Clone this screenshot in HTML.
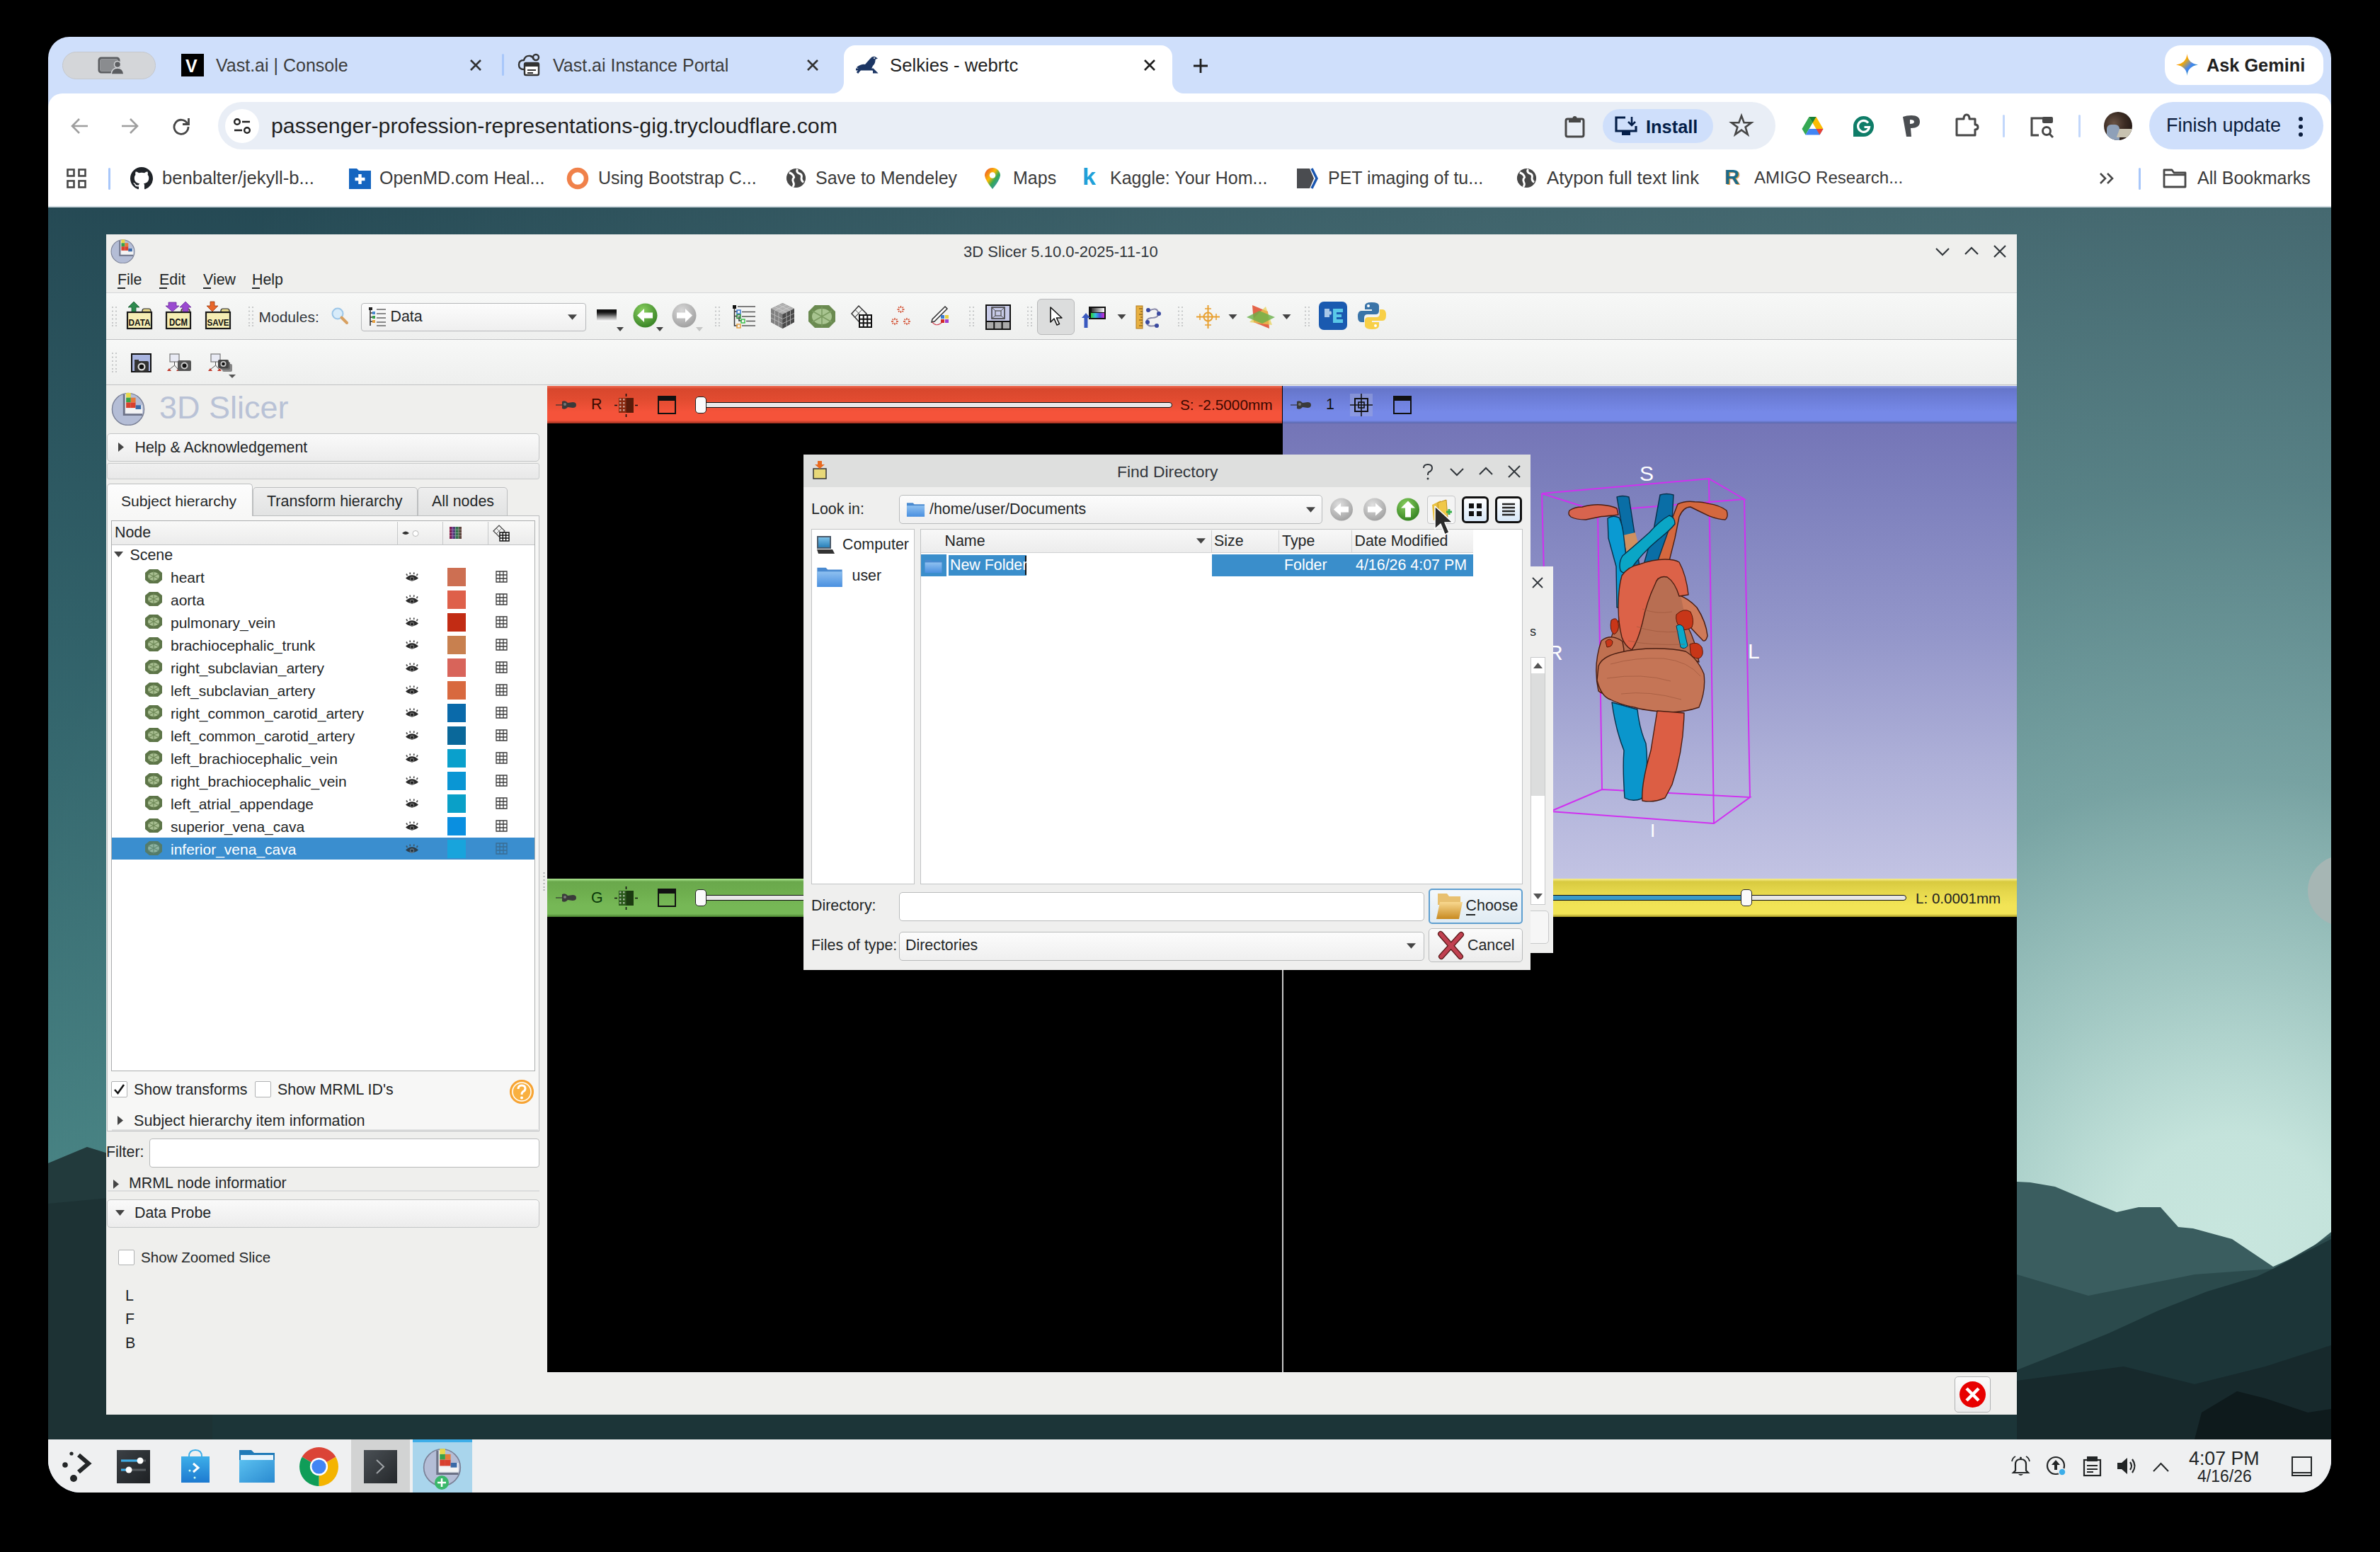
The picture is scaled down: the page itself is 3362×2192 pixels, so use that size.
<!DOCTYPE html>
<html><head><meta charset="utf-8">
<style>
*{box-sizing:border-box;margin:0;padding:0}
html,body{width:3362px;height:2192px;overflow:hidden;background:#000;font-family:"Liberation Sans",sans-serif;position:relative}
.a{position:absolute}
.t{position:absolute;white-space:nowrap;line-height:1}
svg{position:absolute;overflow:visible}
.ct{color:#3c3c3c;font-size:25px}
.bm{color:#3a3a3a;font-size:25px}
.sf{font-size:21.4px;color:#232627}
.wf{font-size:21.4px;color:#fff}
</style></head><body>
<div class="a" style="left:68px;top:52px;width:3225px;height:2056px;border-radius:30px 30px 46px 46px;overflow:hidden;background:#cfdffb">
<div class="a" style="left:-68px;top:-52px;width:3362px;height:2192px">
<!-- ===== tab strip ===== -->
<div class="a" style="left:88px;top:73px;width:132px;height:39px;border-radius:20px;background:#d4d6d9;border:1px solid #c4c7cc"></div>
<svg style="left:138px;top:80px" width="38" height="26" viewBox="0 0 38 26"><rect x="2" y="2" width="28" height="20" rx="3" fill="none" stroke="#5b5d60" stroke-width="3"/><rect x="4" y="4" width="24" height="16" fill="#8a8c8f"/><circle cx="28" cy="11" r="4.5" fill="#5b5d60" stroke="#d4d6d9" stroke-width="1.5"/><path d="M19 25 Q20 16 28 16 Q36 16 37 25Z" fill="#5b5d60" stroke="#d4d6d9" stroke-width="1.5"/></svg>
<div class="a" style="left:256px;top:76px;width:32px;height:32px;background:#000"></div>
<div class="t" style="left:262px;top:81px;font-size:25px;color:#fff;font-weight:bold">V</div>
<div class="t ct" style="left:305px;top:80px">Vast.ai | Console</div>
<svg style="left:663px;top:83px" width="18" height="18" viewBox="0 0 18 18"><path d="M2 2L16 16M16 2L2 16" stroke="#333" stroke-width="2.6"/></svg>
<div class="a" style="left:709px;top:76px;width:3px;height:31px;background:#a8c7fa;border-radius:2px"></div>
<svg style="left:731px;top:75px" width="34" height="34" viewBox="0 0 34 34"><path d="M9 23 Q2 23 2 16.5 Q2 10 9 10 Q11 3 18 4 Q22 5 23 9" fill="none" stroke="#333" stroke-width="2.4"/><circle cx="26" cy="6" r="4" fill="none" stroke="#333" stroke-width="2.4"/><rect x="10" y="14" width="20" height="17" rx="2" fill="#fff" stroke="#333" stroke-width="2.4"/><rect x="10" y="14" width="20" height="5" fill="#333"/><path d="M14 24h12M14 28h8" stroke="#333" stroke-width="2"/></svg>
<div class="t ct" style="left:781px;top:80px">Vast.ai Instance Portal</div>
<svg style="left:1139px;top:83px" width="18" height="18" viewBox="0 0 18 18"><path d="M2 2L16 16M16 2L2 16" stroke="#333" stroke-width="2.6"/></svg>
<!-- active tab with flares -->
<div class="a" style="left:1176px;top:100px;width:496px;height:32px;background:#fff"></div>
<div class="a" style="left:1160px;top:100px;width:32px;height:32px;background:#cfdffb;border-radius:0 0 16px 0"></div>
<div class="a" style="left:1656px;top:100px;width:32px;height:32px;background:#cfdffb;border-radius:0 0 0 16px"></div>
<div class="a" style="left:1192px;top:64px;width:464px;height:68px;background:#fff;border-radius:16px 16px 0 0"></div>
<svg style="left:1207px;top:78px" width="34" height="26" viewBox="0 0 34 26"><path d="M3 17Q10 12 15 13L22 5Q25 1 29 2L33 4.5L29.5 6Q30 11 26 15L24 19H6Z" fill="#1c3664"/><circle cx="28" cy="4" r="1" fill="#fff"/><path d="M2 20H26L30 24H26" fill="none" stroke="#1c3664" stroke-width="3"/><path d="M8 20L4 25" stroke="#1c3664" stroke-width="3"/></svg>
<div class="t" style="left:1257px;top:80px;font-size:25.7px;color:#1f1f1f">Selkies - webrtc</div>
<svg style="left:1615px;top:83px" width="18" height="18" viewBox="0 0 18 18"><path d="M2 2L16 16M16 2L2 16" stroke="#1f1f1f" stroke-width="2.6"/></svg>
<svg style="left:1685px;top:82px" width="22" height="22" viewBox="0 0 22 22"><path d="M11 1V21M1 11H21" stroke="#1f1f1f" stroke-width="2.8"/></svg>
<!-- gemini -->
<div class="a" style="left:3058px;top:64px;width:224px;height:56px;border-radius:22px;background:#fff"></div>
<svg style="left:3074px;top:76px" width="31" height="31" viewBox="0 0 30 30"><defs><linearGradient id="gg" x1="0" y1="0" x2="1" y2="1"><stop offset="0" stop-color="#f5493d"/><stop offset=".35" stop-color="#f9ab00"/><stop offset=".6" stop-color="#4285f4"/><stop offset="1" stop-color="#34a853"/></linearGradient></defs><path d="M15 0 Q16 13 30 15 Q16 17 15 30 Q14 17 0 15 Q14 13 15 0Z" fill="url(#gg)"/></svg>
<div class="t" style="left:3117px;top:80px;font-size:25.3px;font-weight:bold;color:#1f1f1f">Ask Gemini</div>

<!-- ===== toolbar ===== -->
<div class="a" style="left:68px;top:132px;width:3225px;height:161px;background:#fff;border-radius:20px 20px 0 0"></div>
<svg style="left:99px;top:166px" width="26" height="24" viewBox="0 0 26 24"><path d="M25 12H3M13 2L3 12L13 22" fill="none" stroke="#9e9e9e" stroke-width="2.6"/></svg>
<svg style="left:171px;top:166px" width="26" height="24" viewBox="0 0 26 24"><path d="M1 12H23M13 2L23 12L13 22" fill="none" stroke="#9e9e9e" stroke-width="2.6"/></svg>
<svg style="left:243px;top:165px" width="26" height="26" viewBox="0 0 26 26"><path d="M21.5 9 A10 10 0 1 0 23 14" fill="none" stroke="#474747" stroke-width="2.8"/><path d="M23.5 2V10.5H15" fill="none" stroke="#474747" stroke-width="2.8"/></svg>
<div class="a" style="left:308px;top:144px;width:2200px;height:67px;border-radius:34px;background:#e9eef6"></div>
<div class="a" style="left:318px;top:154px;width:48px;height:48px;border-radius:50%;background:#fff"></div>
<svg style="left:329px;top:166px" width="26" height="24" viewBox="0 0 26 24"><circle cx="6" cy="6" r="3.8" fill="none" stroke="#1f1f1f" stroke-width="2.4"/><path d="M13 6H24M2 18H13" stroke="#1f1f1f" stroke-width="2.4"/><circle cx="20" cy="18" r="3.8" fill="none" stroke="#1f1f1f" stroke-width="2.4"/></svg>
<div class="t" style="left:383px;top:163px;font-size:30.3px;color:#1f1f1f">passenger-profession-representations-gig.trycloudflare.com</div>
<svg style="left:2210px;top:163px" width="29" height="32" viewBox="0 0 29 32"><rect x="2" y="5" width="25" height="25" rx="2.5" fill="none" stroke="#474747" stroke-width="3"/><rect x="6" y="5" width="17" height="5" fill="#474747"/><circle cx="14.5" cy="4" r="3" fill="#474747"/></svg>
<div class="a" style="left:2264px;top:154px;width:156px;height:48px;border-radius:24px;background:#cfdffb"></div>
<svg style="left:2280px;top:164px" width="33" height="28" viewBox="0 0 33 28"><path d="M16 2H3V21H31V14" fill="none" stroke="#041e49" stroke-width="3.2"/><path d="M25 1V12M20 8L25 13L30 8" fill="none" stroke="#041e49" stroke-width="2.6"/><rect x="11" y="21" width="12" height="6" fill="#041e49"/></svg>
<div class="t" style="left:2325px;top:167px;font-size:25.4px;font-weight:bold;color:#041e49">Install</div>
<svg style="left:2444px;top:161px" width="32" height="32" viewBox="0 0 32 32"><path d="M16 2.5L19.6 12.3H30L21.6 18.6L24.8 29L16 22.6L7.2 29L10.4 18.6L2 12.3H12.4Z" fill="none" stroke="#474747" stroke-width="2.6" stroke-linejoin="miter"/></svg>
<svg style="left:2545px;top:164px" width="31" height="27" viewBox="0 0 31 27"><path d="M10.5 1H20.5L30.5 18H20.5Z" fill="#fbbc04"/><path d="M10.5 1L0.5 18L5.5 26.5L15.5 9.5Z" fill="#34a853"/><path d="M5.5 26.5H25.5L30.5 18H10.5Z" fill="#4285f4"/><path d="M25.5 26.5L30.5 18H20.5Z" fill="#ea4335"/><path d="M10.5 1L15.5 9.5L20.5 1Z" fill="#188038"/></svg>
<svg style="left:2617px;top:163px" width="31" height="31" viewBox="0 0 31 31"><path d="M15.5 1A14.5 14.5 0 1 1 15.5 30H1V15.5A14.5 14.5 0 0 1 15.5 1Z" fill="#0f7d68"/><path d="M22 10.5A8 8 0 1 0 23.5 16.5H16.5" fill="none" stroke="#fff" stroke-width="3.2"/></svg>
<svg style="left:2687px;top:162px" width="26" height="32" viewBox="0 0 26 32"><path d="M1 3Q6 1 13 1Q25 1 25 10Q25 19 12 19L13 31L6 31Z" fill="#4b4e52"/><path d="M11 7Q17 7 17 10Q17 13 11 13Z" fill="#fff"/></svg>
<svg style="left:2761px;top:159px" width="35" height="34" viewBox="0 0 35 34"><path d="M3 9H13Q13 3 17 3Q21 3 21 9H29V17Q33 17 33 20.5Q33 24 29 24V32H3Z" fill="none" stroke="#474747" stroke-width="3" stroke-linejoin="round"/></svg>
<div class="a" style="left:2829px;top:162px;width:3px;height:32px;background:#c2d7fb;border-radius:2px"></div>
<svg style="left:2867px;top:164px" width="36" height="31" viewBox="0 0 36 31"><path d="M20 3H3V27H13" fill="none" stroke="#474747" stroke-width="3"/><rect x="18" y="1" width="15" height="9" rx="2" fill="#474747"/><circle cx="24" cy="21" r="5.5" fill="none" stroke="#474747" stroke-width="3"/><path d="M28 25L33 30" stroke="#474747" stroke-width="3"/></svg>
<div class="a" style="left:2936px;top:162px;width:3px;height:32px;background:#c2d7fb;border-radius:2px"></div>
<div class="a" style="left:2972px;top:158px;width:40px;height:40px;border-radius:50%;background:radial-gradient(circle at 35% 40%,#6a5446 0,#3b2b22 45%,#2a1e18 70%);overflow:hidden"><div class="a" style="left:4px;top:18px;width:18px;height:22px;background:#8ea0b8;border-radius:6px 6px 0 0"></div><div class="a" style="left:20px;top:24px;width:18px;height:12px;background:#c8c2b0;transform:skewX(-20deg)"></div></div>
<div class="a" style="left:3036px;top:144px;width:246px;height:67px;border-radius:34px;background:#cfdffb"></div>
<div class="t" style="left:3060px;top:164px;font-size:27px;color:#0b1d3d">Finish update</div>
<svg style="left:3245px;top:164px" width="10" height="30" viewBox="0 0 10 30"><circle cx="5" cy="4" r="3" fill="#0b1d3d"/><circle cx="5" cy="15" r="3" fill="#0b1d3d"/><circle cx="5" cy="26" r="3" fill="#0b1d3d"/></svg>

<!-- ===== bookmarks ===== -->
<svg style="left:94px;top:238px" width="28" height="28" viewBox="0 0 28 28"><g fill="none" stroke="#474747" stroke-width="2.6"><rect x="1.5" y="1.5" width="9" height="9"/><rect x="17.5" y="1.5" width="9" height="9"/><rect x="1.5" y="17.5" width="9" height="9"/><rect x="17.5" y="17.5" width="9" height="9"/></g></svg>
<div class="a" style="left:153px;top:237px;width:3px;height:31px;background:#a8c7fa;border-radius:2px"></div>
<svg style="left:184px;top:236px" width="32" height="32" viewBox="0 0 16 16"><path fill="#1f2328" d="M8 0C3.58 0 0 3.58 0 8c0 3.54 2.29 6.53 5.47 7.59.4.07.55-.17.55-.38 0-.19-.01-.82-.01-1.49-2.01.37-2.53-.49-2.69-.94-.09-.23-.48-.94-.82-1.13-.28-.15-.68-.52-.01-.53.63-.01 1.08.58 1.23.82.72 1.21 1.87.87 2.33.66.07-.52.28-.87.51-1.07-1.78-.2-3.64-.89-3.64-3.95 0-.87.31-1.59.82-2.15-.08-.2-.36-1.02.08-2.12 0 0 .67-.21 2.2.82.64-.18 1.32-.27 2-.27.68 0 1.36.09 2 .27 1.53-1.04 2.2-.82 2.2-.82.44 1.1.16 1.92.08 2.12.51.56.82 1.27.82 2.15 0 3.07-1.87 3.75-3.65 3.95.29.25.54.73.54 1.48 0 1.07-.01 1.93-.01 2.2 0 .21.15.46.55.38A8.013 8.013 0 0016 8c0-4.42-3.58-8-8-8z"/></svg>
<div class="t bm" style="left:229px;top:239px;font-size:25.6px">benbalter/jekyll-b...</div>
<svg style="left:493px;top:236px" width="31" height="31" viewBox="0 0 31 31"><path d="M0 2H11L14 5H31V31H0Z" fill="#1565c0"/><path d="M15.5 10V24M8.5 17H22.5" stroke="#fff" stroke-width="4.5"/></svg>
<div class="t bm" style="left:536px;top:239px">OpenMD.com Heal...</div>
<svg style="left:800px;top:236px" width="32" height="32" viewBox="0 0 32 32"><circle cx="16" cy="16" r="12" fill="none" stroke="#f0814a" stroke-width="6.5"/></svg>
<div class="t bm" style="left:845px;top:239px">Using Bootstrap C...</div>
<svg style="left:1109px;top:236px" width="31" height="31" viewBox="0 0 32 32"><circle cx="16" cy="16" r="14" fill="#474747"/><path d="M6 8Q12 10 13 15Q10 18 12 22Q14 26 11 29M18 3Q16 7 20 9Q25 10 24 15Q23 20 27 22" fill="none" stroke="#fff" stroke-width="3"/></svg>
<div class="t bm" style="left:1152px;top:239px">Save to Mendeley</div>
<svg style="left:1390px;top:236px" width="24" height="32" viewBox="0 0 24 32"><defs><linearGradient id="mg" x1="0" y1="0" x2="1" y2="1"><stop offset="0" stop-color="#ea4335"/><stop offset=".4" stop-color="#fbbc04"/><stop offset=".6" stop-color="#34a853"/><stop offset="1" stop-color="#4285f4"/></linearGradient></defs><path d="M12 31Q2 19 1 12A11 11 0 0 1 23 12Q22 19 12 31Z" fill="url(#mg)"/><circle cx="12" cy="11.5" r="4.3" fill="#fff"/></svg>
<div class="t bm" style="left:1431px;top:239px">Maps</div>
<div class="t" style="left:1529px;top:232px;font-size:34px;color:#20a0d8;font-weight:bold">k</div>
<div class="t bm" style="left:1568px;top:239px">Kaggle: Your Hom...</div>
<svg style="left:1832px;top:237px" width="32" height="30" viewBox="0 0 32 30"><path d="M0 1H18L24 15L18 29H0Z" fill="#4a4c50"/><path d="M21 1L28 15L21 29" fill="none" stroke="#1a56b0" stroke-width="3.5"/></svg>
<div class="t bm" style="left:1876px;top:239px">PET imaging of tu...</div>
<svg style="left:2141px;top:236px" width="31" height="31" viewBox="0 0 32 32"><circle cx="16" cy="16" r="14" fill="#474747"/><path d="M6 8Q12 10 13 15Q10 18 12 22Q14 26 11 29M18 3Q16 7 20 9Q25 10 24 15Q23 20 27 22" fill="none" stroke="#fff" stroke-width="3"/></svg>
<div class="t bm" style="left:2185px;top:239px;font-size:25.8px">Atypon full text link</div>
<div class="t" style="left:2436px;top:236px;font-size:29px;font-weight:bold;color:#1a6a8a;text-shadow:2px 1px 0 #e8a050">R</div>
<div class="t bm" style="left:2478px;top:239px;font-size:24.1px">AMIGO Research...</div>
<svg style="left:2965px;top:243px" width="22" height="18" viewBox="0 0 22 18"><path d="M2 2L9 9L2 16M12 2L19 9L12 16" fill="none" stroke="#474747" stroke-width="2.6"/></svg>
<div class="a" style="left:3021px;top:237px;width:3px;height:31px;background:#a8c7fa;border-radius:2px"></div>
<svg style="left:3055px;top:238px" width="34" height="28" viewBox="0 0 34 28"><path d="M2 2H13L16 6H32V26H2Z" fill="none" stroke="#474747" stroke-width="2.8" stroke-linejoin="round"/><path d="M2 9H32" stroke="#474747" stroke-width="2.4"/></svg>
<div class="t bm" style="left:3104px;top:239px">All Bookmarks</div>
<div class="a" style="left:68px;top:291px;width:3225px;height:2px;background:#d0dbe0"></div>
<!-- ===== taskbar ===== -->
<div class="a" style="left:68px;top:2033px;width:3225px;height:75px;background:#eff0f1"></div>
<svg style="left:87px;top:2050px" width="42" height="43" viewBox="0 0 42 43"><circle cx="14" cy="3" r="2.6" fill="#232627"/><circle cx="5" cy="19" r="3.8" fill="#232627"/><circle cx="17" cy="38" r="5" fill="#232627"/><path d="M24 5L38 17L24 29" fill="none" stroke="#232627" stroke-width="6"/></svg>
<svg style="left:165px;top:2048px" width="47" height="47" viewBox="0 0 47 47"><defs><linearGradient id="tdk" x1="0" y1="0" x2="1" y2="1"><stop offset="0" stop-color="#3b4045"/><stop offset="1" stop-color="#1e2124"/></linearGradient></defs><rect width="47" height="47" fill="url(#tdk)"/><path d="M6 15H41M6 28H41" stroke="#555a5e" stroke-width="3"/><path d="M6 15H33M6 28H17" stroke="#3daee9" stroke-width="3"/><circle cx="33" cy="15" r="4.5" fill="#fff"/><circle cx="17" cy="28" r="4.5" fill="#fff"/></svg>
<svg style="left:255px;top:2047px" width="42" height="48" viewBox="0 0 42 48"><defs><linearGradient id="tbg" x1="0" y1="0" x2="0" y2="1"><stop offset="0" stop-color="#3daee9"/><stop offset="1" stop-color="#1d7ad0"/></linearGradient></defs><path d="M12 10Q12 1 21 1Q30 1 30 10" fill="none" stroke="#3daee9" stroke-width="2"/><path d="M1 10H41V47H1Z" fill="url(#tbg)"/><path d="M18 20L25 26L18 32" fill="none" stroke="#fff" stroke-width="3"/><circle cx="13" cy="30" r="1.5" fill="#cfe"/><circle cx="20" cy="40" r="1.5" fill="#cfe"/></svg>
<svg style="left:337px;top:2047px" width="52" height="48" viewBox="0 0 52 48"><path d="M1 1H18L22 5H51V47H1Z" fill="#1f7ab8"/><rect x="3" y="8" width="46" height="10" fill="#e8f4fc"/><defs><linearGradient id="tfd" x1="0" y1="0" x2="1" y2="1"><stop offset="0" stop-color="#5ac0f0"/><stop offset="1" stop-color="#2a8ad0"/></linearGradient></defs><path d="M1 15H51V47H1Z" fill="url(#tfd)"/></svg>
<svg style="left:423px;top:2044px" width="55" height="55" viewBox="0 0 48 48"><path d="M24 24L3.22 12A24 24 0 0 1 44.78 12Z" fill="#db4437"/><path d="M24 24L44.78 12A24 24 0 0 1 24 48Z" fill="#f4b400"/><path d="M24 24L24 48A24 24 0 0 1 3.22 12Z" fill="#0f9d58"/><circle cx="24" cy="24" r="11" fill="#fff"/><circle cx="24" cy="24" r="8.8" fill="#4285f4"/></svg>
<div class="a" style="left:496px;top:2033px;width:83px;height:75px;background:#d2d3d3"></div>
<svg style="left:514px;top:2048px" width="47" height="47" viewBox="0 0 47 47"><defs><linearGradient id="ttm" x1="0" y1="0" x2="1" y2="1"><stop offset="0" stop-color="#4a5055"/><stop offset="1" stop-color="#25282b"/></linearGradient></defs><rect width="47" height="47" fill="url(#ttm)"/><path d="M18 14L28 23.5L18 33" fill="none" stroke="#a0a4a8" stroke-width="2"/></svg>
<div class="a" style="left:583px;top:2033px;width:84px;height:75px;background:#a9d5ec"></div>
<div class="a" style="left:583px;top:2033px;width:84px;height:4px;background:#3daee9"></div>
<svg style="left:597px;top:2044px" width="55" height="55"><use href="#slogo" width="55" height="55"/></svg>
<svg style="left:613px;top:2083px" width="22" height="22" viewBox="0 0 22 22"><circle cx="11" cy="11" r="10" fill="#3ab86a"/><path d="M11 5V17M5 11H17" stroke="#fff" stroke-width="2.5"/></svg>
<!-- tray -->
<svg style="left:2839px;top:2055px" width="31" height="31" viewBox="0 0 31 31"><path d="M8 22V13Q8 6 15.5 6Q23 6 23 13V22L26 25H5Z" fill="none" stroke="#232627" stroke-width="2.2"/><path d="M12 27Q15.5 31 19 27" fill="#232627"/><path d="M3 9Q4 4 8 2M28 9Q27 4 23 2" fill="none" stroke="#232627" stroke-width="1.8"/><circle cx="15.5" cy="4" r="1.5" fill="#232627"/></svg>
<svg style="left:2890px;top:2056px" width="30" height="30" viewBox="0 0 30 30"><circle cx="14" cy="14" r="12" fill="none" stroke="#232627" stroke-width="2.2"/><path d="M14 6L20 13H16V20H12V13H8Z" fill="#232627"/><circle cx="23" cy="23" r="5" fill="#3daee9" stroke="#eff0f1" stroke-width="1.5"/></svg>
<svg style="left:2942px;top:2056px" width="27" height="29" viewBox="0 0 27 29"><rect x="2" y="6" width="23" height="22" fill="none" stroke="#232627" stroke-width="2.2"/><rect x="6" y="1" width="15" height="7" fill="#232627"/><path d="M6 14H21M6 19H21M6 23H15" stroke="#232627" stroke-width="2"/></svg>
<svg style="left:2990px;top:2056px" width="30" height="29" viewBox="0 0 30 29"><path d="M1 10H7L15 3V26L7 19H1Z" fill="#232627"/><path d="M19 9Q23 14.5 19 20M22 5Q29 14.5 22 24" fill="none" stroke="#232627" stroke-width="2.2"/></svg>
<svg style="left:3041px;top:2065px" width="23" height="14" viewBox="0 0 23 14"><path d="M1 13L11.5 2L22 13" fill="none" stroke="#232627" stroke-width="2"/></svg>
<div class="t" style="left:3092px;top:2047.4px;font-size:26.75px;color:#232627">4:07 PM</div>
<div class="t" style="left:3104px;top:2073.5px;font-size:23px;color:#232627">4/16/26</div>
<svg style="left:3237px;top:2057px" width="29" height="28" viewBox="0 0 29 28"><rect x="1" y="1" width="27" height="26" fill="none" stroke="#232627" stroke-width="2"/><path d="M1 23H28" stroke="#232627" stroke-width="2"/></svg>
</div></div>
<svg style="left:68px;top:293px;overflow:hidden" width="3225" height="1740" viewBox="68 293 3225 1740">
<defs>
<linearGradient id="skyL" x1="0" y1="293" x2="0" y2="1700" gradientUnits="userSpaceOnUse">
<stop offset="0" stop-color="#264b56"/><stop offset=".45" stop-color="#33656d"/><stop offset="1" stop-color="#4a8888"/></linearGradient>
<radialGradient id="glow" cx="3150" cy="1760" r="3150" gradientUnits="userSpaceOnUse">
<stop offset="0" stop-color="#c8e6de" stop-opacity="1"/>
<stop offset=".05" stop-color="#c8e6de" stop-opacity=".97"/>
<stop offset=".12" stop-color="#c8e6de" stop-opacity=".72"/>
<stop offset=".21" stop-color="#c8e6de" stop-opacity=".44"/>
<stop offset=".34" stop-color="#c8e6de" stop-opacity=".27"/>
<stop offset=".47" stop-color="#c8e6de" stop-opacity=".19"/>
<stop offset=".67" stop-color="#c8e6de" stop-opacity=".13"/>
<stop offset="1" stop-color="#c8e6de" stop-opacity="0"/>
</radialGradient>
<linearGradient id="dk" x1="68" y1="0" x2="1800" y2="0" gradientUnits="userSpaceOnUse"><stop offset="0" stop-color="#1a3035" stop-opacity=".05"/><stop offset="1" stop-color="#1a3035" stop-opacity="0"/></linearGradient>
</defs>
<rect x="68" y="293" width="3225" height="1740" fill="url(#skyL)"/>
<rect x="68" y="293" width="3225" height="1740" fill="url(#glow)"/>
<rect x="68" y="293" width="3225" height="1740" fill="url(#dk)"/>
<path d="M68 1643L123 1620L175 1636L400 1660L900 1690L1500 1700L2300 1680L2849 1669L2868 1670L2903 1676L2955 1698L2990 1712L3021 1705L3052 1705L3077 1733L3098 1735L3153 1750L3211 1789L3258 1768L3293 1740V2033H68Z" fill="#3a5d5f"/>
<path d="M68 1720L300 1770L900 1820L2000 1830L2849 1800L2950 1830L3100 1800L3211 1792L3293 1745V2033H68Z" fill="#2b4a4c"/>
<path d="M68 1800L400 1880L1200 1950L2200 1960L2849 1935L2910 1911L2979 1883L3049 1851L3118 1824L3188 1803L3211 1792L3293 1750V2033H68Z" fill="#1c3538"/>
<path d="M2849 1950L3000 1930L3100 1955L3200 1930L3293 1900V2033H2849Z" fill="#17292c"/>
<path d="M3100 2033L3110 1995L3160 1965L3200 1975L3260 1995L3293 1990V2033Z" fill="#0e1a1c"/>
<path d="M68 1643L123 1620L175 1636L300 1660V2033H68Z" fill="#223a3c"/>
<path d="M68 1700L175 1690L300 1720V2033H68Z" fill="#1d3234"/>
<circle cx="3310" cy="1258" r="50" fill="#a6b6b4"/>
</svg>
<svg style="left:0;top:0" width="0" height="0"><defs>
<symbol id="slogo" viewBox="0 0 100 100">
<circle cx="50" cy="52" r="47" fill="#b4bdd6" stroke="#7a8096" stroke-width="3"/>
<path d="M38 8 L38 68 L92 68 L92 40 L70 40 L70 20 L56 20 L56 8Z" fill="#eef0f4"/>
<path d="M38 8 L38 68 L92 68" fill="none" stroke="#6d7388" stroke-width="6"/>
<rect x="44" y="4" width="14" height="14" fill="#e8d84a"/><rect x="44" y="18" width="14" height="14" fill="#3aa04a"/><rect x="58" y="18" width="14" height="14" fill="#e67a3a"/>
<rect x="44" y="32" width="14" height="16" fill="#d8402e"/><rect x="58" y="32" width="14" height="16" fill="#d8402e"/><rect x="72" y="40" width="16" height="16" fill="#3a6aa8"/>
<path d="M44 52 L92 52 L92 62 L44 62Z" fill="#f4f4f4"/>
</symbol>
<symbol id="model" viewBox="0 0 24 20">
<path d="M6 0H18L24 5V15L18 20H6L0 15V5Z" fill="#5d7548"/>
<ellipse cx="12" cy="10" rx="8" ry="6" fill="#a9bf92"/>
<path d="M4 6L20 14M4 14L20 6M12 2V18" stroke="#6f8a58" stroke-width="1.2"/>
</symbol>
<symbol id="eye" viewBox="0 0 20 16">
<path d="M1 9.5 Q10 1 19 9.5 Q10 17 1 9.5Z" fill="#2a2a2a"/>
<circle cx="10" cy="10.5" r="3.2" fill="#666"/><circle cx="10" cy="10.5" r="1.6" fill="#111"/>
<path d="M3.5 6L2 3.5M7.5 4L7 1.5M12.5 4L13 1.5M16.5 6L18 3.5" stroke="#444" stroke-width="1.6"/>
</symbol>
<symbol id="grid" viewBox="0 0 17 17">
<path d="M1 1H16V16H1ZM6 1V16M11 1V16M1 6H16M1 11H16" fill="none" stroke="#3a3a3a" stroke-width="1.3"/>
</symbol>
<symbol id="grip" viewBox="0 0 7 28">
<g fill="#b8babb"><circle cx="1" cy="1" r="1"/><circle cx="6" cy="1" r="1"/><circle cx="1" cy="6.5" r="1"/><circle cx="6" cy="6.5" r="1"/><circle cx="1" cy="12" r="1"/><circle cx="6" cy="12" r="1"/><circle cx="1" cy="17.5" r="1"/><circle cx="6" cy="17.5" r="1"/><circle cx="1" cy="23" r="1"/><circle cx="6" cy="23" r="1"/><circle cx="1" cy="27" r="1"/><circle cx="6" cy="27" r="1"/></g>
</symbol>
<symbol id="ddarrow" viewBox="0 0 12 7"><path d="M0 0H12L6 7Z" fill="#444"/></symbol>
<symbol id="folderblue" viewBox="0 0 28 24">
<path d="M1 3H10L12 5H27V23H1Z" fill="#4a8ad0"/><path d="M1 7H27V23H1Z" fill="url(#fbg)"/>
</symbol>
<linearGradient id="fbg" x1="0" y1="0" x2="0" y2="1"><stop offset="0" stop-color="#8ec0f0"/><stop offset="1" stop-color="#4a90e0"/></linearGradient>
</defs></svg>
<div class="a" style="left:150px;top:331px;width:2699px;height:1667px;background:#efefed"></div>
<svg style="left:156px;top:337px" width="35" height="35"><use href="#slogo" width="35" height="35"/></svg>
<div class="t" style="left:1361px;top:344.9px;font-size:22px;color:#31363b;">3D Slicer 5.10.0-2025-11-10</div>
<svg style="left:2733px;top:346px" width="102" height="18" viewBox="0 0 102 18"><path d="M2 5L11 14L20 5" fill="none" stroke="#31363b" stroke-width="2.2"/><path d="M43 13L52 4L61 13" fill="none" stroke="#31363b" stroke-width="2.2"/><path d="M84 1L100 17M100 1L84 17" stroke="#31363b" stroke-width="2.2"/></svg>
<div class="t" style="left:166px;top:384.9px;font-size:21.4px;color:#232627;">File</div>
<div class="a" style="left:166px;top:406px;width:11px;height:2px;background:#232627"></div>
<div class="t" style="left:225px;top:384.9px;font-size:21.4px;color:#232627;">Edit</div>
<div class="a" style="left:225px;top:406px;width:11px;height:2px;background:#232627"></div>
<div class="t" style="left:287px;top:384.9px;font-size:21.4px;color:#232627;">View</div>
<div class="a" style="left:287px;top:406px;width:11px;height:2px;background:#232627"></div>
<div class="t" style="left:356px;top:384.9px;font-size:21.4px;color:#232627;">Help</div>
<div class="a" style="left:356px;top:406px;width:11px;height:2px;background:#232627"></div>
<div class="a" style="left:150px;top:413px;width:2699px;height:1px;background:#d6d8d9"></div>
<div class="a" style="left:150px;top:414px;width:2699px;height:65px;background:linear-gradient(#f7f8f7,#eeefee)"></div>
<div class="a" style="left:150px;top:479px;width:2699px;height:1px;background:#c0c2c3"></div>
<div class="a" style="left:150px;top:480px;width:2699px;height:63px;background:linear-gradient(#f7f8f7,#eeefee)"></div>
<div class="a" style="left:150px;top:543px;width:2699px;height:1px;background:#c0c2c3"></div>
<svg style="left:158px;top:433px" width="7" height="28"><use href="#grip" width="7" height="28"/></svg>
<svg style="left:351px;top:433px" width="7" height="28"><use href="#grip" width="7" height="28"/></svg>
<svg style="left:1010px;top:433px" width="7" height="28"><use href="#grip" width="7" height="28"/></svg>
<svg style="left:1369px;top:433px" width="7" height="28"><use href="#grip" width="7" height="28"/></svg>
<svg style="left:1451px;top:433px" width="7" height="28"><use href="#grip" width="7" height="28"/></svg>
<svg style="left:1664px;top:433px" width="7" height="28"><use href="#grip" width="7" height="28"/></svg>
<svg style="left:1843px;top:433px" width="7" height="28"><use href="#grip" width="7" height="28"/></svg>
<svg style="left:158px;top:498px" width="7" height="28"><use href="#grip" width="7" height="28"/></svg>
<svg style="left:179px;top:425px" width="38" height="42" viewBox="0 0 38 42"><path d="M22 14Q22 11 25 11H31Q34 11 34 14V16H22Z" fill="#e6d88a" stroke="#222" stroke-width="1.2"/><rect x="1" y="16" width="34" height="23" fill="#f6eeb4" stroke="#1a1a1a" stroke-width="2.2"/><text x="18" y="35" font-family="Liberation Sans" font-weight="bold" font-size="12" text-anchor="middle" fill="#111" textLength="31" lengthAdjust="spacingAndGlyphs">DATA</text><path d="M10 1L18 9H13V15H7V9H2Z" fill="#2e8a4e" stroke="#1b5a30" stroke-width="0.8"/></svg>
<svg style="left:234px;top:425px" width="38" height="42" viewBox="0 0 38 42"><path d="M22 14Q22 11 25 11H31Q34 11 34 14V16H22Z" fill="#e6d88a" stroke="#222" stroke-width="1.2"/><rect x="1" y="16" width="34" height="23" fill="#f6eeb4" stroke="#1a1a1a" stroke-width="2.2"/><text x="18" y="35" font-family="Liberation Sans" font-weight="bold" font-size="14" text-anchor="middle" fill="#111" textLength="26" lengthAdjust="spacingAndGlyphs">DCM</text><path d="M2 2H13V7H17L7.5 15L-2 7H2Z" transform="translate(2,0)" fill="#9a4ad0" stroke="#6a2a9a" stroke-width="0.8"/><path d="M28 1L36 9H32V15H24V9H20Z" fill="#9a4ad0" stroke="#6a2a9a" stroke-width="0.8"/></svg>
<svg style="left:290px;top:425px" width="38" height="42" viewBox="0 0 38 42"><path d="M22 14Q22 11 25 11H31Q34 11 34 14V16H22Z" fill="#e6d88a" stroke="#222" stroke-width="1.2"/><rect x="1" y="16" width="34" height="23" fill="#f6eeb4" stroke="#1a1a1a" stroke-width="2.2"/><text x="18" y="35" font-family="Liberation Sans" font-weight="bold" font-size="12" text-anchor="middle" fill="#111" textLength="31" lengthAdjust="spacingAndGlyphs">SAVE</text><path d="M7 1H13V7H18L10 15L2 7H7Z" fill="#e8662a" stroke="#9a3a10" stroke-width="0.8"/></svg>
<div class="t" style="left:365.5px;top:437.2px;font-size:21px;color:#31363b;">Modules:</div>
<svg style="left:468px;top:434px" width="24" height="24" viewBox="0 0 24 24"><circle cx="9" cy="9" r="7.5" fill="#d8ecfa" stroke="#9cc6e8" stroke-width="2"/><path d="M14.5 14.5L22 22" stroke="#d8a060" stroke-width="4" stroke-linecap="round"/></svg>
<div class="a" style="left:510px;top:428px;width:318px;height:40px;border:1px solid #b6b8ba;border-radius:4px;background:linear-gradient(#fcfcfc,#efefef)"></div>
<svg style="left:520px;top:434px" width="26" height="28" viewBox="0 0 26 28"><path d="M3 2V26M3 8H7M3 14H7M3 20H7" stroke="#333" stroke-width="1.6" fill="none"/><rect x="1" y="0" width="5" height="4" fill="#222"/><rect x="6" y="6" width="4" height="4" fill="#4a8ad0"/><rect x="6" y="12" width="4" height="4" fill="#3aa04a"/><rect x="6" y="18" width="4" height="4" fill="#e8a040"/><path d="M12 3H25M12 9H25M12 15H25M12 21H25M12 26H25" stroke="#666" stroke-width="1.6"/></svg>
<div class="t" style="left:551.5px;top:437.3px;font-size:21.4px;color:#232627;">Data</div>
<svg style="left:802px;top:444px" width="13" height="8"><use href="#ddarrow" width="13" height="8"/></svg>
<div class="a" style="left:843px;top:437px;width:28px;height:17px;background:linear-gradient(#111 0,#111 22%,#444 40%,#888 58%,#bbb 75%,#eee 92%,#fff)"></div>
<svg style="left:871px;top:462px" width="10" height="6"><use href="#ddarrow" width="10" height="6"/></svg>
<svg style="left:927px;top:462px" width="10" height="6"><use href="#ddarrow" width="10" height="6"/></svg>
<svg style="left:983px;top:462px;opacity:.25" width="10" height="6"><use href="#ddarrow" width="10" height="6"/></svg>
<svg style="left:894px;top:428px" width="35" height="35" viewBox="0 0 35 35"><defs><radialGradient id="grn" cx=".4" cy=".3" r=".8"><stop offset="0" stop-color="#8ad060"/><stop offset="1" stop-color="#2e7a1e"/></radialGradient></defs><circle cx="17.5" cy="17.5" r="17" fill="url(#grn)"/><path d="M6 17.5L16 8V13.5H28V21.5H16V27Z" fill="#fff"/></svg>
<svg style="left:949px;top:428px" width="35" height="35" viewBox="0 0 35 35"><defs><radialGradient id="gry" cx=".4" cy=".3" r=".8"><stop offset="0" stop-color="#d8d8d8"/><stop offset="1" stop-color="#9a9a9a"/></radialGradient></defs><circle cx="17.5" cy="17.5" r="17" fill="url(#gry)"/><path d="M29 17.5L19 8V13.5H7V21.5H19V27Z" fill="#fff"/></svg>
<svg style="left:1035px;top:431px" width="33" height="33" viewBox="0 0 33 33"><path d="M2.5 3V29H7M2.5 9H7M2.5 15.5H7M9 15.5V22H13" fill="none" stroke="#333" stroke-width="1.5"/><rect x="0" y="0" width="5" height="5" fill="#111"/><rect x="6" y="7" width="5" height="5" fill="none" stroke="#3a7ad0" stroke-width="1.5"/><rect x="6" y="13.5" width="5" height="5" fill="none" stroke="#2a8a3a" stroke-width="1.5"/><rect x="12" y="20" width="5" height="5" fill="none" stroke="#3ac04a" stroke-width="1.5"/><rect x="6" y="27" width="5" height="5" fill="none" stroke="#e8a040" stroke-width="1.5"/><path d="M7 2H32M13 9.5H32M13 16H32M19 22.5H32M13 29H32" stroke="#555" stroke-width="1.6"/></svg>
<svg style="left:1088px;top:427px" width="35" height="38" viewBox="0 0 35 38"><path d="M17.5 1L34 9V28L17.5 37L1 28V9Z" fill="#6a6a6a"/><path d="M17.5 1L34 9L17.5 17L1 9Z" fill="#b0b0b0"/><path d="M17.5 17V37L1 28V9Z" fill="#808080"/><path d="M17.5 17V37L34 28V9Z" fill="#4a4a4a"/><path d="M6.5 6.3L23 14.3M12 3.6L28.5 11.6M12 14.3L28.5 6.3M6.5 11.6L23 3.6M6.5 12V31M12 14.6V34M1 15.5L17.5 23.5M1 22L17.5 30M23 14.6V34M28.5 12V31M34 15.5L17.5 23.5M34 22L17.5 30" stroke="#d8d8d8" stroke-width="0.9" opacity=".7"/></svg>
<svg style="left:1142px;top:431px" width="38" height="32" viewBox="0 0 38 32"><path d="M9 0H29L38 9V23L29 32H9L0 23V9Z" fill="#6a8a50"/><ellipse cx="19" cy="16" rx="14" ry="11" fill="#a8c490"/><path d="M5 8L33 24M5 24L33 8M19 2V30" stroke="#7a9a60" stroke-width="1.5"/></svg>
<svg style="left:1202px;top:431px" width="30" height="32" viewBox="0 0 30 32"><path d="M1 12L11 1L22 12L11 23Z" fill="none" stroke="#333" stroke-width="1.5"/><path d="M6 6.5L17 17.5M11 12L6 17M16 6L5 17.5" stroke="#555" stroke-width="1"/><rect x="12" y="14" width="17" height="17" fill="#fff" stroke="#111" stroke-width="2"/><path d="M17.7 14V31M23.3 14V31M12 19.7H29M12 25.3H29" stroke="#111" stroke-width="2"/></svg>
<svg style="left:1257px;top:432px" width="31" height="29" viewBox="0 0 31 29" stroke="#d04020" stroke-width="1.4"><g transform="translate(15.5,5)"><path d="M-5 0H-2M2 0H5M0 -5V-2M0 2V5M-3.5 -3.5L-2 -2M2 2L3.5 3.5M-3.5 3.5L-2 2M2 -2L3.5 -3.5"/></g><g transform="translate(7,22)"><path d="M-5 0H-2M2 0H5M0 -5V-2M0 2V5M-3.5 -3.5L-2 -2M2 2L3.5 3.5M-3.5 3.5L-2 2M2 -2L3.5 -3.5"/></g><g transform="translate(24,22)"><path d="M-5 0H-2M2 0H5M0 -5V-2M0 2V5M-3.5 -3.5L-2 -2M2 2L3.5 3.5M-3.5 3.5L-2 2M2 -2L3.5 -3.5"/></g></svg>
<svg style="left:1314px;top:432px" width="28" height="30" viewBox="0 0 28 30"><path d="M21 1L24 4L6 22L2 23L3 19Z" fill="#fff" stroke="#333" stroke-width="1.5"/><rect x="15" y="13" width="5" height="5" fill="#3a7ad0"/><rect x="21" y="13" width="5" height="5" fill="#e8d040"/><rect x="15" y="19" width="5" height="5" fill="#d02a2a"/><rect x="21" y="19" width="5" height="5" fill="#a040d0"/><path d="M3 23Q8 30 16 24" fill="none" stroke="#d04050" stroke-width="1.2"/></svg>
<svg style="left:1392px;top:430px" width="36" height="36" viewBox="0 0 36 36"><rect x="1" y="1" width="34" height="34" fill="#c8cbe8" stroke="#111" stroke-width="2"/><rect x="9" y="4" width="18" height="16" fill="#c8cbe8" stroke="#333" stroke-width="1.5"/><rect x="14" y="9" width="8" height="7" fill="none" stroke="#555" stroke-width="1.3"/><path d="M9 4L14 9M27 4L22 9M9 20L14 16M27 20L22 16" stroke="#555" stroke-width="1"/><path d="M1 24H35" stroke="#111" stroke-width="2"/><rect x="2" y="25" width="32" height="9" fill="#aaa"/><path d="M12.3 24V35M23.6 24V35" stroke="#111" stroke-width="2"/></svg>
<div class="a" style="left:1465px;top:422px;width:53px;height:51px;border:1px solid #b8b9ba;border-radius:6px;background:#dcdddd"></div>
<svg style="left:1483px;top:433px" width="20" height="28" viewBox="0 0 20 28"><path d="M1 1V22L6 17L10 26L13.5 24.5L9.5 16H17Z" fill="#fff" stroke="#111" stroke-width="1.6" stroke-linejoin="round"/></svg>
<svg style="left:1528px;top:432px" width="36" height="32" viewBox="0 0 36 32"><rect x="10" y="1" width="24" height="18" fill="#111"/><rect x="14" y="3" width="18" height="6" fill="url(#wlg)"/><rect x="13" y="10" width="19" height="7" fill="url(#rainbow)"/><defs><linearGradient id="wlg"><stop offset="0" stop-color="#333"/><stop offset="1" stop-color="#fff"/></linearGradient><linearGradient id="rainbow"><stop offset="0" stop-color="#30d030"/><stop offset=".33" stop-color="#30c0e0"/><stop offset=".66" stop-color="#5050e0"/><stop offset="1" stop-color="#d030d0"/></linearGradient></defs><path d="M6 10L12 17H8.5V31H3.5V17H0Z" fill="#3a5ac0"/></svg>
<svg style="left:1578px;top:444px" width="13" height="7"><use href="#ddarrow" width="13" height="7"/></svg>
<svg style="left:1604px;top:431px" width="38" height="34" viewBox="0 0 38 34"><rect x="1" y="1" width="9" height="32" fill="#e8b040" stroke="#b07a20" stroke-width="1"/><path d="M5 5H10M7 9H10M5 13H10M7 17H10M5 21H10M7 25H10M5 29H10" stroke="#6a4a10" stroke-width="1"/><path d="M19 8Q30 2 32 10Q34 18 22 18Q14 19 16 26Q19 32 30 28" fill="none" stroke="#8a8aaa" stroke-width="2"/><circle cx="18" cy="7" r="3" fill="#3a4aa0"/><circle cx="33" cy="12" r="3" fill="#3a4aa0"/><circle cx="17" cy="24" r="3" fill="#3a4aa0"/><circle cx="30" cy="29" r="3" fill="#3a4aa0"/></svg>
<svg style="left:1690px;top:431px" width="33" height="33" viewBox="0 0 33 33"><path d="M16.5 0V33M0 16.5H33" stroke="#e8a030" stroke-width="2"/><circle cx="16.5" cy="16.5" r="6" fill="none" stroke="#e8a030" stroke-width="2"/><path d="M12 5H21M12 28H21M5 12V21M28 12V21" stroke="#e8a030" stroke-width="1.5"/></svg>
<svg style="left:1735px;top:444px" width="13" height="7"><use href="#ddarrow" width="13" height="7"/></svg>
<svg style="left:1761px;top:431px" width="40" height="33" viewBox="0 0 40 33"><path d="M8 0L30 9L32 33L10 24Z" fill="#e04a2a" opacity=".85"/><path d="M27 2L36 28L4 24Z" fill="#e8d050" opacity=".7"/><path d="M0 17L18 8L40 17L22 26Z" fill="#6ab04a" opacity=".8"/></svg>
<svg style="left:1811px;top:444px" width="13" height="7"><use href="#ddarrow" width="13" height="7"/></svg>
<svg style="left:1863px;top:426px" width="40" height="40" viewBox="0 0 40 40"><rect x="0" y="0" width="40" height="40" rx="7" fill="#1a5ab0"/><path d="M8 10H15V14Q18 12 18 16Q18 20 15 18V22H8Z" fill="#a8c8e8"/><path d="M20 10H34V15H25V18H32V22H25V25H34V30H20Z" fill="#5ac8e8"/></svg>
<svg style="left:1918px;top:426px" width="40" height="40" viewBox="0 0 40 40"><path d="M19.5 1Q10 1 10 6V11H20V13H5Q0 13 0 21Q0 29 5 29H9V23Q9 18 14 18H25Q30 18 30 13V6Q30 1 19.5 1Z" fill="#3a74a8"/><circle cx="15" cy="6" r="2" fill="#fff"/><path d="M20.5 39Q30 39 30 34V29H20V27H35Q40 27 40 19Q40 11 35 11H31V17Q31 22 26 22H15Q10 22 10 27V34Q10 39 20.5 39Z" fill="#f8d048"/><circle cx="25" cy="34" r="2" fill="#fff"/></svg>
<svg style="left:185px;top:499px" width="29" height="27" viewBox="0 0 29 27"><rect x="1" y="1" width="27" height="25" fill="#a8b4e0" stroke="#111" stroke-width="2"/><rect x="5" y="9" width="6" height="3" fill="#333"/><rect x="5" y="11" width="20" height="15" rx="2" fill="#333"/><circle cx="15" cy="19" r="5.5" fill="#ddd"/><circle cx="15" cy="19" r="3.3" fill="#111"/></svg>
<svg style="left:234px;top:500px" width="37" height="25" viewBox="0 0 37 25"><rect x="6" y="0" width="13" height="11" fill="#e8eaf4" stroke="#777" stroke-width="1.2"/><path d="M12.5 11V16M12.5 16L5 22M12.5 16L18 22" stroke="#555" stroke-width="1"/><path d="M2 24L5 20L8 24M15 24L18 20L21 24" fill="#c0392b"/><rect x="17" y="9" width="19" height="15" rx="2" fill="#555"/><circle cx="26.5" cy="16.5" r="5" fill="#ccc"/><circle cx="26.5" cy="16.5" r="3" fill="#111"/></svg>
<svg style="left:292px;top:500px" width="42" height="34" viewBox="0 0 42 34"><rect x="6" y="0" width="13" height="11" fill="#e8eaf4" stroke="#777" stroke-width="1.2"/><path d="M12.5 11V16M12.5 16L5 22M12.5 16L18 22" stroke="#555" stroke-width="1"/><path d="M2 24L5 20L8 24M15 24L18 20L21 24" fill="#c0392b"/><rect x="22" y="14" width="14" height="11" rx="2" fill="#888"/><rect x="19" y="11" width="14" height="11" rx="2" fill="#666"/><rect x="16" y="8" width="15" height="12" rx="2" fill="#444"/><circle cx="23.5" cy="14" r="4" fill="#ccc"/><circle cx="23.5" cy="14" r="2.3" fill="#111"/><path d="M31 29H41L36 34Z" fill="#555"/></svg><svg style="left:157px;top:553px" width="48" height="48"><use href="#slogo" width="48" height="48"/></svg>
<div class="t" style="left:225px;top:553.4px;font-size:45px;color:#b9c2d6;">3D Slicer</div>
<div class="a" style="left:151px;top:612px;width:611px;height:40px;border:1px solid #c3c5c6;border-radius:5px;background:linear-gradient(#fafafa,#ececec)"></div>
<svg style="left:167px;top:625px" width="8" height="13" viewBox="0 0 8 13"><path d="M0 0L8 6.5L0 13Z" fill="#444"/></svg>
<div class="t" style="left:190.5px;top:621.9px;font-size:21.4px;color:#232627;">Help &amp; Acknowledgement</div>
<div class="a" style="left:151px;top:654px;width:611px;height:23px;border:1px solid #c8cacb;border-radius:3px;background:linear-gradient(#f0f0f0,#e8e8e8)"></div>
<div class="a" style="left:151px;top:728px;width:611px;height:870px;border:1px solid #bcbebf;background:#f7f7f6"></div>
<div class="a" style="left:357px;top:688px;width:233px;height:41px;border:1px solid #bcbebf;border-radius:5px 5px 0 0;background:linear-gradient(#eeeeee,#e2e3e3)"></div>
<div class="a" style="left:590px;top:688px;width:127px;height:41px;border:1px solid #bcbebf;border-radius:5px 5px 0 0;background:linear-gradient(#eeeeee,#e2e3e3)"></div>
<div class="a" style="left:151px;top:683px;width:206px;height:46px;border:1px solid #bcbebf;border-bottom:none;border-radius:5px 5px 0 0;background:linear-gradient(#fdfdfd,#f7f7f6)"></div>
<div class="t" style="left:171px;top:696.9px;font-size:21.1px;color:#232627;">Subject hierarchy</div>
<div class="t" style="left:377px;top:697.8px;font-size:21.5px;color:#232627;">Transform hierarchy</div>
<div class="t" style="left:610px;top:697.9px;font-size:21.4px;color:#232627;">All nodes</div>
<div class="a" style="left:157px;top:735px;width:599px;height:778px;border:1px solid #acaeaf;background:#fff"></div>
<div class="a" style="left:158px;top:736px;width:597px;height:34px;background:linear-gradient(#f9f9f8,#ebebeb);border-bottom:1px solid #c2c4c5"></div>
<div class="a" style="left:561px;top:737px;width:1px;height:33px;background:#c6c8c9"></div>
<div class="a" style="left:625px;top:737px;width:1px;height:33px;background:#c6c8c9"></div>
<div class="a" style="left:689px;top:737px;width:1px;height:33px;background:#c6c8c9"></div>
<div class="t" style="left:162px;top:742.4px;font-size:21.4px;color:#232627;">Node</div>
<svg style="left:568px;top:749px" width="24" height="9" viewBox="0 0 24 9"><path d="M0 4Q5 -1 10 4Q5 8 0 4Z" fill="#333"/><circle cx="19" cy="4.5" r="4" fill="#fff" stroke="#bbb" stroke-width="1"/></svg>
<svg style="left:635px;top:744px" width="17" height="17" viewBox="0 0 17 17"><defs><linearGradient id="cg"><stop offset="0" stop-color="#8a1a3a"/><stop offset=".3" stop-color="#5a2a8a"/><stop offset=".6" stop-color="#2a7a4a"/><stop offset="1" stop-color="#6a3a3a"/></linearGradient></defs><rect x="0" y="0" width="17" height="17" fill="url(#cg)"/><path d="M4.2 0V17M8.5 0V17M12.7 0V17M0 4.2H17M0 8.5H17M0 12.7H17" stroke="#ddd" stroke-width=".7" opacity=".6"/></svg>
<svg style="left:696px;top:741px" width="24" height="24" viewBox="0 0 24 24"><path d="M1 9L9 1L17 9L9 17Z" fill="none" stroke="#444" stroke-width="1.2"/><path d="M5 5L13 13M9 9L5 13M13 5L5 13" stroke="#666" stroke-width=".8"/><rect x="10" y="11" width="13" height="12" fill="#fff" stroke="#111" stroke-width="1.5"/><path d="M14.3 11V23M18.6 11V23M10 15H23M10 19H23" stroke="#111" stroke-width="1.5"/></svg>
<svg style="left:161px;top:779px" width="13" height="8" viewBox="0 0 13 8"><path d="M0 0H13L6.5 8Z" fill="#444"/></svg>
<div class="t" style="left:183.5px;top:774.4px;font-size:21.4px;color:#232627;">Scene</div>
<svg style="left:205px;top:804.0px" width="24" height="20"><use href="#model" width="24" height="20"/></svg>
<div class="t" style="left:241px;top:805.2px;font-size:21px;color:#232627;">heart</div>
<svg style="left:572px;top:806.5px" width="20" height="16"><use href="#eye" width="20" height="16"/></svg>
<div class="a" style="left:632px;top:801.5px;width:26px;height:26px;background:#cd6f52"></div>
<svg style="left:700px;top:806.0px" width="17" height="17"><use href="#grid" width="17" height="17"/></svg>
<svg style="left:205px;top:836.0px" width="24" height="20"><use href="#model" width="24" height="20"/></svg>
<div class="t" style="left:241px;top:837.2px;font-size:21px;color:#232627;">aorta</div>
<svg style="left:572px;top:838.5px" width="20" height="16"><use href="#eye" width="20" height="16"/></svg>
<div class="a" style="left:632px;top:833.5px;width:26px;height:26px;background:#de604a"></div>
<svg style="left:700px;top:838.0px" width="17" height="17"><use href="#grid" width="17" height="17"/></svg>
<svg style="left:205px;top:868.0px" width="24" height="20"><use href="#model" width="24" height="20"/></svg>
<div class="t" style="left:241px;top:869.2px;font-size:21px;color:#232627;">pulmonary_vein</div>
<svg style="left:572px;top:870.5px" width="20" height="16"><use href="#eye" width="20" height="16"/></svg>
<div class="a" style="left:632px;top:865.5px;width:26px;height:26px;background:#c22c14"></div>
<svg style="left:700px;top:870.0px" width="17" height="17"><use href="#grid" width="17" height="17"/></svg>
<svg style="left:205px;top:900.0px" width="24" height="20"><use href="#model" width="24" height="20"/></svg>
<div class="t" style="left:241px;top:901.2px;font-size:21px;color:#232627;">brachiocephalic_trunk</div>
<svg style="left:572px;top:902.5px" width="20" height="16"><use href="#eye" width="20" height="16"/></svg>
<div class="a" style="left:632px;top:897.5px;width:26px;height:26px;background:#c8804f"></div>
<svg style="left:700px;top:902.0px" width="17" height="17"><use href="#grid" width="17" height="17"/></svg>
<svg style="left:205px;top:932.0px" width="24" height="20"><use href="#model" width="24" height="20"/></svg>
<div class="t" style="left:241px;top:933.2px;font-size:21px;color:#232627;">right_subclavian_artery</div>
<svg style="left:572px;top:934.5px" width="20" height="16"><use href="#eye" width="20" height="16"/></svg>
<div class="a" style="left:632px;top:929.5px;width:26px;height:26px;background:#d8645a"></div>
<svg style="left:700px;top:934.0px" width="17" height="17"><use href="#grid" width="17" height="17"/></svg>
<svg style="left:205px;top:964.0px" width="24" height="20"><use href="#model" width="24" height="20"/></svg>
<div class="t" style="left:241px;top:965.2px;font-size:21px;color:#232627;">left_subclavian_artery</div>
<svg style="left:572px;top:966.5px" width="20" height="16"><use href="#eye" width="20" height="16"/></svg>
<div class="a" style="left:632px;top:961.5px;width:26px;height:26px;background:#d8693f"></div>
<svg style="left:700px;top:966.0px" width="17" height="17"><use href="#grid" width="17" height="17"/></svg>
<svg style="left:205px;top:996.0px" width="24" height="20"><use href="#model" width="24" height="20"/></svg>
<div class="t" style="left:241px;top:997.2px;font-size:21px;color:#232627;">right_common_carotid_artery</div>
<svg style="left:572px;top:998.5px" width="20" height="16"><use href="#eye" width="20" height="16"/></svg>
<div class="a" style="left:632px;top:993.5px;width:26px;height:26px;background:#0a6aaa"></div>
<svg style="left:700px;top:998.0px" width="17" height="17"><use href="#grid" width="17" height="17"/></svg>
<svg style="left:205px;top:1028.0px" width="24" height="20"><use href="#model" width="24" height="20"/></svg>
<div class="t" style="left:241px;top:1029.2px;font-size:21px;color:#232627;">left_common_carotid_artery</div>
<svg style="left:572px;top:1030.5px" width="20" height="16"><use href="#eye" width="20" height="16"/></svg>
<div class="a" style="left:632px;top:1025.5px;width:26px;height:26px;background:#0a689a"></div>
<svg style="left:700px;top:1030.0px" width="17" height="17"><use href="#grid" width="17" height="17"/></svg>
<svg style="left:205px;top:1060.0px" width="24" height="20"><use href="#model" width="24" height="20"/></svg>
<div class="t" style="left:241px;top:1061.2px;font-size:21px;color:#232627;">left_brachiocephalic_vein</div>
<svg style="left:572px;top:1062.5px" width="20" height="16"><use href="#eye" width="20" height="16"/></svg>
<div class="a" style="left:632px;top:1057.5px;width:26px;height:26px;background:#0aa0cc"></div>
<svg style="left:700px;top:1062.0px" width="17" height="17"><use href="#grid" width="17" height="17"/></svg>
<svg style="left:205px;top:1092.0px" width="24" height="20"><use href="#model" width="24" height="20"/></svg>
<div class="t" style="left:241px;top:1093.2px;font-size:21px;color:#232627;">right_brachiocephalic_vein</div>
<svg style="left:572px;top:1094.5px" width="20" height="16"><use href="#eye" width="20" height="16"/></svg>
<div class="a" style="left:632px;top:1089.5px;width:26px;height:26px;background:#0a96d4"></div>
<svg style="left:700px;top:1094.0px" width="17" height="17"><use href="#grid" width="17" height="17"/></svg>
<svg style="left:205px;top:1124.0px" width="24" height="20"><use href="#model" width="24" height="20"/></svg>
<div class="t" style="left:241px;top:1125.2px;font-size:21px;color:#232627;">left_atrial_appendage</div>
<svg style="left:572px;top:1126.5px" width="20" height="16"><use href="#eye" width="20" height="16"/></svg>
<div class="a" style="left:632px;top:1121.5px;width:26px;height:26px;background:#0aa0c8"></div>
<svg style="left:700px;top:1126.0px" width="17" height="17"><use href="#grid" width="17" height="17"/></svg>
<svg style="left:205px;top:1156.0px" width="24" height="20"><use href="#model" width="24" height="20"/></svg>
<div class="t" style="left:241px;top:1157.2px;font-size:21px;color:#232627;">superior_vena_cava</div>
<svg style="left:572px;top:1158.5px" width="20" height="16"><use href="#eye" width="20" height="16"/></svg>
<div class="a" style="left:632px;top:1153.5px;width:26px;height:26px;background:#0a8fe0"></div>
<svg style="left:700px;top:1158.0px" width="17" height="17"><use href="#grid" width="17" height="17"/></svg>
<div class="a" style="left:158px;top:1183.0px;width:597px;height:31px;background:#3a8ecf"></div>
<svg style="left:205px;top:1188.0px" width="24" height="20" opacity=.75><use href="#model" width="24" height="20"/></svg>
<div class="t" style="left:241px;top:1189.2px;font-size:21px;color:#fff;">inferior_vena_cava</div>
<svg style="left:572px;top:1190.5px" width="20" height="16" opacity=.8><use href="#eye" width="20" height="16"/></svg>
<div class="a" style="left:632px;top:1185.5px;width:26px;height:26px;background:#18a4dc"></div>
<svg style="left:700px;top:1190.0px" width="17" height="17" opacity=.4><use href="#grid" width="17" height="17"/></svg>
<div class="a" style="left:157px;top:1527px;width:23px;height:23px;border:1px solid #b0b2b3;border-radius:2px;background:#fff"></div>
<svg style="left:160px;top:1530px" width="17" height="17" viewBox="0 0 17 17"><path d="M2 9L6.5 14L15 2" fill="none" stroke="#111" stroke-width="2.6"/></svg>
<div class="t" style="left:189px;top:1529.3px;font-size:21.4px;color:#232627;">Show transforms</div>
<div class="a" style="left:360px;top:1527px;width:23px;height:23px;border:1px solid #b0b2b3;border-radius:2px;background:#fff"></div>
<div class="t" style="left:392px;top:1529.3px;font-size:21.4px;color:#232627;">Show MRML ID's</div>
<svg style="left:719px;top:1524px" width="36" height="36" viewBox="0 0 36 36"><circle cx="18" cy="18" r="16" fill="#f9b040" stroke="#f6a030" stroke-width="2"/><circle cx="18" cy="18" r="13" fill="none" stroke="#fff" stroke-width="1.5"/><path d="M13 14Q13 9 18 9Q23 9 23 13.5Q23 16.5 19.5 18Q18 19 18 22" fill="none" stroke="#fff" stroke-width="3"/><circle cx="18" cy="26.5" r="2" fill="#fff"/></svg>
<div class="a" style="left:158px;top:1595px;width:602px;height:2px;background:#e0e1e1"></div>
<svg style="left:166px;top:1576px" width="8" height="13" viewBox="0 0 8 13"><path d="M0 0L8 6.5L0 13Z" fill="#444"/></svg>
<div class="t" style="left:189px;top:1572.4px;font-size:21.6px;color:#232627;">Subject hierarchy item information</div>
<div class="t" style="left:150px;top:1616.9px;font-size:21.4px;color:#232627;">Filter:</div>
<div class="a" style="left:211px;top:1608px;width:551px;height:41px;border:1px solid #b8babb;border-radius:4px;background:#fff"></div>
<svg style="left:160px;top:1666px" width="8" height="13" viewBox="0 0 8 13"><path d="M0 0L8 6.5L0 13Z" fill="#444"/></svg>
<div class="t" style="left:182px;top:1660.9px;font-size:21.4px;color:#232627;">MRML node informatior</div>
<div class="a" style="left:152px;top:1681px;width:610px;height:2px;background:#dcdddd"></div>
<div class="a" style="left:151px;top:1694px;width:611px;height:40px;border:1px solid #c3c5c6;border-radius:5px;background:linear-gradient(#fafafa,#ececec)"></div>
<svg style="left:163px;top:1709px" width="13" height="8" viewBox="0 0 13 8"><path d="M0 0H13L6.5 8Z" fill="#444"/></svg>
<div class="t" style="left:190px;top:1702.9px;font-size:21.4px;color:#232627;">Data Probe</div>
<div class="a" style="left:167px;top:1765px;width:23px;height:22px;border:1px solid #b0b2b3;border-radius:2px;background:#fff"></div>
<div class="t" style="left:199px;top:1766.2px;font-size:20.6px;color:#232627;">Show Zoomed Slice</div>
<div class="t" style="left:177px;top:1819.6px;font-size:21.4px;color:#232627;">L</div>
<div class="t" style="left:177px;top:1852.7px;font-size:21.4px;color:#232627;">F</div>
<div class="t" style="left:177px;top:1886.5px;font-size:21.4px;color:#232627;">B</div>
<svg style="left:766px;top:1231px" width="5" height="28" viewBox="0 0 5 28"><g fill="#9a9c9d"><circle cx="2.5" cy="2" r="1"/><circle cx="2.5" cy="7" r="1"/><circle cx="2.5" cy="12" r="1"/><circle cx="2.5" cy="17" r="1"/><circle cx="2.5" cy="22" r="1"/><circle cx="2.5" cy="26" r="1"/></g></svg>
<div class="a" style="left:773px;top:545px;width:1038px;height:53px;background:linear-gradient(#f07058 0,#d8472d 8%,#e14b30 35%,#f5533a 70%,#f5533a 92%,#9a3020 100%)"></div>
<div class="a" style="left:773px;top:598px;width:1038px;height:643px;background:#000"></div>
<div class="a" style="left:1811px;top:545px;width:1038px;height:53px;background:linear-gradient(#8c9ae6 0,#6676ca 8%,#6d7ed8 35%,#7689e8 70%,#7689e8 92%,#5a66a8 100%)"></div>
<div class="a" style="left:1812px;top:598px;width:1037px;height:643px;background:linear-gradient(#7475b7 0,#7d80bd 15%,#9295c9 45%,#aeb0d8 75%,#c2c3e3 100%)"></div>
<div class="a" style="left:773px;top:1241px;width:1038px;height:54px;background:linear-gradient(#b0ea94 0,#6aa84c 8%,#6eae4e 35%,#76b856 70%,#76b856 92%,#4a8030 100%)"></div>
<div class="a" style="left:1812px;top:1241px;width:1037px;height:54px;background:linear-gradient(#faf090 0,#d8ca40 8%,#e6d84c 35%,#f2e456 70%,#f2e456 92%,#a89a28 100%)"></div>
<div class="a" style="left:773px;top:1295px;width:2076px;height:643px;background:#000"></div>
<div class="a" style="left:1811px;top:545px;width:1px;height:1393px;background:#000"></div>
<div class="a" style="left:1811px;top:1295px;width:2px;height:643px;background:#ddd;opacity:.9"></div>
<svg style="left:785px;top:562.5px" width="30" height="18" viewBox="0 0 30 18"><path d="M0 9H10" stroke="#333" stroke-width="1.2"/><path d="M9 4Q14 2 17 6L24 5Q29 5 29 9Q29 13 24 13L17 12Q14 16 9 14Z" fill="#3a3a3a"/><circle cx="13" cy="8" r="2" fill="#777"/></svg>
<div class="t" style="left:835px;top:561.4px;font-size:21.4px;color:#3a0a00;">R</div>
<svg style="left:868px;top:555.5px" width="33" height="33" viewBox="0 0 33 33"><path d="M16.5 0V4M16.5 29V33M0 16.5H4M29 16.5H33" stroke="#111" stroke-width="1.6"/><rect x="6" y="6" width="21" height="21" fill="#8a2a10"/><g fill="#fff" opacity=".55"><rect x="7" y="7" width="2.5" height="2.5"/><rect x="7" y="12" width="2.5" height="2.5"/><rect x="7" y="17" width="2.5" height="2.5"/><rect x="7" y="22" width="2.5" height="2.5"/><rect x="12" y="7" width="2.5" height="2.5"/><rect x="12" y="12" width="2.5" height="2.5"/><rect x="12" y="17" width="2.5" height="2.5"/><rect x="12" y="22" width="2.5" height="2.5"/></g><rect x="16.5" y="6" width="10.5" height="21" fill="#000" opacity=".35"/></svg>
<svg style="left:929px;top:558.5px" width="26" height="26" viewBox="0 0 26 26"><rect x="1" y="1" width="24" height="24" fill="none" stroke="#111" stroke-width="2"/><rect x="1" y="1" width="24" height="6" fill="#111"/></svg>
<div class="a" style="left:990px;top:567.5px;width:666px;height:8px;background:#e8e8e8;border:1.5px solid #111;border-radius:4px"></div>
<div class="a" style="left:982px;top:559.5px;width:16px;height:24px;background:#fafafa;border:1.5px solid #222;border-radius:5px"></div>
<div class="t" style="left:1667px;top:562.4px;font-size:20.8px;color:#3a0800;">S: -2.5000mm</div>
<svg style="left:1823px;top:562.5px" width="30" height="18" viewBox="0 0 30 18"><path d="M0 9H10" stroke="#333" stroke-width="1.2"/><path d="M9 4Q14 2 17 6L24 5Q29 5 29 9Q29 13 24 13L17 12Q14 16 9 14Z" fill="#3a3a3a"/><circle cx="13" cy="8" r="2" fill="#777"/></svg>
<div class="t" style="left:1873px;top:561.4px;font-size:21.4px;color:#111;">1</div>
<div class="a" style="left:1907px;top:555.5px;width:32px;height:32px;background:rgba(160,170,220,.5)"></div>
<svg style="left:1907px;top:555.5px" width="32" height="32" viewBox="0 0 32 32"><path d="M16 0V32M0 16H32" stroke="#111" stroke-width="1.6"/><rect x="7" y="7" width="18" height="18" fill="none" stroke="#111" stroke-width="2"/><rect x="12" y="12" width="8" height="8" fill="none" stroke="#111" stroke-width="1.6"/></svg>
<svg style="left:1968px;top:558.5px" width="26" height="26" viewBox="0 0 26 26"><rect x="1" y="1" width="24" height="24" fill="none" stroke="#111" stroke-width="2"/><rect x="1" y="1" width="24" height="6" fill="#111"/></svg>
<svg style="left:785px;top:1259px" width="30" height="18" viewBox="0 0 30 18"><path d="M0 9H10" stroke="#333" stroke-width="1.2"/><path d="M9 4Q14 2 17 6L24 5Q29 5 29 9Q29 13 24 13L17 12Q14 16 9 14Z" fill="#3a3a3a"/><circle cx="13" cy="8" r="2" fill="#777"/></svg>
<div class="t" style="left:835px;top:1257.9px;font-size:21.4px;color:#0a3a0a;">G</div>
<svg style="left:868px;top:1252px" width="33" height="33" viewBox="0 0 33 33"><path d="M16.5 0V4M16.5 29V33M0 16.5H4M29 16.5H33" stroke="#111" stroke-width="1.6"/><rect x="6" y="6" width="21" height="21" fill="#2a5a1a"/><g fill="#fff" opacity=".55"><rect x="7" y="7" width="2.5" height="2.5"/><rect x="7" y="12" width="2.5" height="2.5"/><rect x="7" y="17" width="2.5" height="2.5"/><rect x="7" y="22" width="2.5" height="2.5"/><rect x="12" y="7" width="2.5" height="2.5"/><rect x="12" y="12" width="2.5" height="2.5"/><rect x="12" y="17" width="2.5" height="2.5"/><rect x="12" y="22" width="2.5" height="2.5"/></g><rect x="16.5" y="6" width="10.5" height="21" fill="#000" opacity=".35"/></svg>
<svg style="left:929px;top:1255px" width="26" height="26" viewBox="0 0 26 26"><rect x="1" y="1" width="24" height="24" fill="none" stroke="#111" stroke-width="2"/><rect x="1" y="1" width="24" height="6" fill="#111"/></svg>
<div class="a" style="left:990px;top:1264px;width:821px;height:8px;background:#e8e8e8;border:1.5px solid #111;border-radius:4px"></div>
<div class="a" style="left:982px;top:1256px;width:16px;height:24px;background:#fafafa;border:1.5px solid #222;border-radius:5px"></div>
<svg style="left:1824px;top:1259px" width="30" height="18" viewBox="0 0 30 18"><path d="M0 9H10" stroke="#333" stroke-width="1.2"/><path d="M9 4Q14 2 17 6L24 5Q29 5 29 9Q29 13 24 13L17 12Q14 16 9 14Z" fill="#3a3a3a"/><circle cx="13" cy="8" r="2" fill="#777"/></svg>
<svg style="left:1907px;top:1252px" width="33" height="33" viewBox="0 0 33 33"><path d="M16.5 0V4M16.5 29V33M0 16.5H4M29 16.5H33" stroke="#111" stroke-width="1.6"/><rect x="6" y="6" width="21" height="21" fill="#555"/><g fill="#fff" opacity=".55"><rect x="7" y="7" width="2.5" height="2.5"/><rect x="7" y="12" width="2.5" height="2.5"/><rect x="7" y="17" width="2.5" height="2.5"/><rect x="7" y="22" width="2.5" height="2.5"/><rect x="12" y="7" width="2.5" height="2.5"/><rect x="12" y="12" width="2.5" height="2.5"/><rect x="12" y="17" width="2.5" height="2.5"/><rect x="12" y="22" width="2.5" height="2.5"/></g><rect x="16.5" y="6" width="10.5" height="21" fill="#000" opacity=".35"/></svg>
<svg style="left:1968px;top:1255px" width="26" height="26" viewBox="0 0 26 26"><rect x="1" y="1" width="24" height="24" fill="none" stroke="#111" stroke-width="2"/><rect x="1" y="1" width="24" height="6" fill="#111"/></svg>
<div class="a" style="left:2467px;top:1264px;width:226px;height:8px;background:#e8e8e8;border:1.5px solid #111;border-radius:4px"></div>
<div class="a" style="left:2029px;top:1264px;width:442px;height:8px;background:#3a9ac8;border:1.5px solid #111;border-radius:4px"></div>
<div class="a" style="left:2459px;top:1256px;width:16px;height:24px;background:#fafafa;border:1.5px solid #222;border-radius:5px"></div>
<div class="t" style="left:2706px;top:1259.1px;font-size:20.6px;color:#222;">L: 0.0001mm</div>
<div class="a" style="left:2761px;top:1944px;width:51px;height:51px;border:1px solid #b0b2b3;border-radius:5px;background:linear-gradient(#fbfbfb,#ececec)"></div>
<svg style="left:2767px;top:1950px" width="39" height="39" viewBox="0 0 39 39"><circle cx="19.5" cy="19.5" r="18.5" fill="#e80000"/><path d="M11 11L28 28M28 11L11 28" stroke="#fff" stroke-width="4.5"/></svg><svg style="left:1812px;top:598px;overflow:hidden" width="1037" height="643" viewBox="1812 598 1037 643">
<g stroke="#d030f0" stroke-width="2" fill="none">
<path d="M2178 697L2414 676L2464 705L2257 722Z"/>
<path d="M2190 1146L2421 1163L2472 1126L2263 1115Z"/>
<path d="M2178 697L2190 1146M2414 676L2421 1163M2464 705L2472 1126M2257 722L2263 1115"/>
</g>
<g font-family="Liberation Sans" fill="#fff" font-size="30">
<text x="2316" y="679">S</text><text x="2469" y="930">L</text><text x="2186" y="932">R</text><text x="2331" y="1182" font-size="26">I</text>
</g>
<g stroke="#4a1e12" stroke-width="1.4" stroke-linejoin="round">
<!-- orange trunk behind + left subclavian arc -->
<path d="M2338 792L2352 760L2363 730L2370 712Q2380 707 2394 708.7Q2406 709 2414 711.4Q2430 714 2439 721Q2442 730 2437 734Q2428 734 2414 728.6Q2400 722 2388 716Q2378 716 2372 730L2366 760L2356 800Z" fill="#d4683e"/>
<!-- right subclavian (image left) -->
<path d="M2217 721Q2224 716 2235 716Q2250 712 2262 713Q2276 714 2284 718L2286 727Q2270 729 2262 729.5Q2250 732 2240 734Q2226 734 2219 730Q2214 726 2217 721Z" fill="#d8644e"/>
</g>
<g stroke="#08304a" stroke-width="1.4" stroke-linejoin="round">
<path d="M2284 702Q2292 699 2301 702L2310 760L2316 800L2300 806L2294 760Z" fill="#0a6ea6"/>
<path d="M2345 699Q2354 696 2364 699L2362 735L2340 797L2322 797L2336 748Z" fill="#0a6ea6"/>
</g>
<path d="M2293 756L2310 752L2316 775L2300 795Z" fill="#d09060"/>
<g stroke="#08304a" stroke-width="1.4" stroke-linejoin="round">
<!-- light blue tube -->
<path d="M2271 732Q2278 727 2287 731Q2292 740 2294 760L2298 795L2298 858L2284 858L2283 800L2272 760Z" fill="#0a9ad2"/>
<!-- cyan diagonal -->
<path d="M2358 728Q2366 730 2366 740Q2360 748 2345 760Q2320 780 2302 806Q2294 812 2289 806Q2286 795 2292 785Q2310 770 2330 752Q2345 735 2358 728Z" fill="#0aa6c6"/>
</g>
<g stroke="#4a1e12" stroke-width="1.4" stroke-linejoin="round">
<!-- heart upper atria -->
<path d="M2302 836Q2330 830 2360 838Q2375 860 2384 885Q2395 905 2400 935Q2370 922 2340 918Q2300 920 2275 930Q2270 905 2285 880Q2295 860 2302 836Z" fill="#b86e52"/>
<path d="M2262 905Q2276 894 2292 906Q2298 932 2288 962Q2272 988 2258 976Q2250 940 2262 905Z" fill="#c07050"/>
<!-- main ventricles -->
<path d="M2258 941Q2262 928 2286 922Q2310 916 2339 916Q2365 916 2381 920Q2398 930 2407 952Q2410 975 2400 999Q2380 1006 2356 1006Q2320 1003 2309 999Q2285 994 2275 988Q2262 984 2256 961Z" fill="#c57556"/>
<!-- left atrial appendage -->
<path d="M2370 840Q2385 845 2397 858Q2410 878 2412 898Q2410 906 2406 905Q2396 895 2388 886Q2378 870 2368 860Z" fill="#cf7a58"/>
<path d="M2326 850Q2338 808 2356 812Q2372 822 2376 850L2384 890L2320 900Z" fill="#b86e52" stroke="none"/>
<!-- ascending aorta + arch -->
<path d="M2286 858Q2286 830 2291 813Q2300 800 2316 797Q2335 790 2352 790Q2366 790 2372 794Q2382 812 2385 840L2372 842Q2366 822 2355 815Q2342 812 2338 825Q2326 850 2320 880Q2314 905 2305 918Q2295 912 2291 900Q2286 880 2286 858Z" fill="#dc6248"/>
</g>
<g stroke="#5a1a08" stroke-width="1">
<path d="M2368 868Q2378 858 2388 864Q2394 876 2390 886Q2380 892 2374 888Q2366 878 2368 868Z" fill="#c83618"/>
<path d="M2387 910Q2398 905 2404 914Q2408 926 2400 930Q2390 930 2388 922Z" fill="#c83618"/>
<path d="M2276 876Q2284 870 2286 880Q2288 892 2280 896Q2273 890 2276 876Z" fill="#c83618"/>
<path d="M2268 906Q2274 900 2278 906Q2278 914 2270 914Z" fill="#c83618"/>
</g>
<path d="M2368 884Q2374 880 2378 886L2384 912Q2380 918 2374 914Z" fill="#0aa8c8" stroke="#08304a" stroke-width="1"/>
<path d="M2275 938Q2310 928 2350 930Q2385 934 2402 955M2270 958Q2320 950 2360 962M2290 980Q2330 975 2375 988M2320 860Q2340 868 2362 864M2312 885Q2340 895 2372 892M2300 905Q2330 912 2380 910" fill="none" stroke="#9a5438" stroke-width="1" opacity=".6"/>
<g stroke="#08304a" stroke-width="1.4" stroke-linejoin="round">
<path d="M2277 992L2313 1002Q2316 1030 2325 1050Q2330 1090 2319 1128Q2306 1133 2295 1127Q2292 1085 2294 1060Q2282 1030 2277 992Z" fill="#0a96cc"/>
</g>
<g stroke="#4a1e12" stroke-width="1.4" stroke-linejoin="round">
<path d="M2341 1004L2379 1007Q2378 1060 2362 1108L2352 1127Q2336 1134 2320 1131Q2318 1108 2332 1060Z" fill="#dc5e44"/>
</g>
</svg>
<div class="a" style="left:2162px;top:800px;width:32px;height:546px;background:#efefee"></div>
<svg style="left:2164px;top:815px" width="16" height="16" viewBox="0 0 16 16"><path d="M1 1L15 15M15 1L1 15" stroke="#31363b" stroke-width="1.8"/></svg>
<div class="t" style="left:2161px;top:882.8px;font-size:18px;color:#232627;">s</div>
<div class="a" style="left:2162px;top:928px;width:21px;height:350px;border:1px solid #c8c9ca;background:#fff"></div>
<div class="a" style="left:2163px;top:951px;width:19px;height:173px;background:#dcdddd"></div>
<svg style="left:2166px;top:936px" width="13" height="8" viewBox="0 0 13 8"><path d="M0 8H13L6.5 0Z" fill="#555"/></svg>
<svg style="left:2166px;top:1262px" width="13" height="8" viewBox="0 0 13 8"><path d="M0 0H13L6.5 8Z" fill="#555"/></svg>
<div class="a" style="left:2150px;top:1286px;width:38px;height:47px;border:1px solid #c8c9ca;border-radius:5px;background:#f6f6f6"></div>
<div class="a" style="left:1135px;top:642px;width:1027px;height:728px;background:#efefee"></div>
<div class="a" style="left:1135px;top:642px;width:1027px;height:46px;background:#dedfde"></div>
<svg style="left:1147px;top:650px" width="24" height="28" viewBox="0 0 24 28"><path d="M2 12H20V26H2Z" fill="#e8d878" stroke="#333" stroke-width="1.5"/><path d="M8 1H14V6H18L11 12L4 6H8Z" fill="#e86a20"/></svg>
<div class="t" style="left:1578px;top:654.6px;font-size:22.9px;color:#31363b;">Find Directory</div>
<svg style="left:2009px;top:656px" width="140" height="22" viewBox="0 0 140 22"><path d="M2 5Q2 0 8 0Q14 0 14 5Q14 9 9 11Q8 12 8 15" fill="none" stroke="#31363b" stroke-width="2"/><circle cx="8" cy="20" r="1.5" fill="#31363b"/><path d="M40 6L49 15L58 6" fill="none" stroke="#31363b" stroke-width="2"/><path d="M81 14L90 5L99 14" fill="none" stroke="#31363b" stroke-width="2"/><path d="M122 2L138 18M138 2L122 18" stroke="#31363b" stroke-width="2"/></svg>
<div class="t" style="left:1146px;top:708.9px;font-size:21.4px;color:#232627;">Look in:</div>
<div class="a" style="left:1270px;top:699px;width:598px;height:41px;border:1px solid #b9bbbc;border-radius:5px;background:linear-gradient(#fcfcfc,#efefef)"></div>
<svg style="left:1280px;top:707px" width="27" height="24"><use href="#folderblue" width="27" height="24"/></svg>
<div class="t" style="left:1313px;top:708.9px;font-size:21.4px;color:#232627;">/home/user/Documents</div>
<svg style="left:1845px;top:716px" width="13" height="8"><use href="#ddarrow" width="13" height="8"/></svg>
<svg style="left:1878px;top:701px" width="34" height="37" viewBox="0 0 34 34"><defs><radialGradient id="g2" cx=".4" cy=".3" r=".8"><stop offset="0" stop-color="#e0e0e0"/><stop offset="1" stop-color="#9a9a9a"/></radialGradient></defs><circle cx="17" cy="17" r="16" fill="url(#g2)"/><path d="M6 17L16 8V13H27V21H16V26Z" fill="#fff"/></svg>
<svg style="left:1925px;top:701px" width="34" height="37" viewBox="0 0 34 34"><circle cx="17" cy="17" r="16" fill="url(#g2)"/><path d="M28 17L18 8V13H7V21H18V26Z" fill="#fff"/></svg>
<svg style="left:1972px;top:701px" width="34" height="37" viewBox="0 0 34 34"><defs><radialGradient id="g3" cx=".4" cy=".3" r=".8"><stop offset="0" stop-color="#8ad060"/><stop offset="1" stop-color="#2a7a1a"/></radialGradient></defs><circle cx="17" cy="17" r="16" fill="url(#g3)"/><path d="M17 5L27 15H21V28H13V15H7Z" fill="#fff"/></svg>
<div class="a" style="left:2016px;top:700px;width:40px;height:40px;border:1px solid #c6c7c8;border-radius:4px;background:#f4f4f4"></div>
<svg style="left:2021px;top:703px" width="32" height="34" viewBox="0 0 32 34"><path d="M2 10L14 4L16 30L4 32Z" fill="#e8c040"/><path d="M10 7L22 3L24 28L12 31Z" fill="#f0c848" stroke="#c09020" stroke-width="1"/><path d="M22 20H30M26 16V24" stroke="#3ab04a" stroke-width="3"/></svg>
<div class="a" style="left:2065px;top:701px;width:38px;height:38px;border:3px solid #111;border-radius:6px;background:linear-gradient(#ffffff,#d8e8f8)"></div>
<svg style="left:2074px;top:710px" width="20" height="20" viewBox="0 0 20 20"><rect x="1" y="1" width="7" height="7" fill="#111"/><rect x="12" y="1" width="7" height="7" fill="#111"/><rect x="1" y="12" width="7" height="7" fill="#111"/><rect x="12" y="12" width="7" height="7" fill="#111"/></svg>
<div class="a" style="left:2112px;top:701px;width:38px;height:38px;border:3px solid #111;border-radius:6px;background:linear-gradient(#ffffff,#d8e8f8)"></div>
<svg style="left:2121px;top:709px" width="20" height="22" viewBox="0 0 20 22"><path d="M1 3H19M1 8H19M1 13H19M1 18H19" stroke="#222" stroke-width="2.5"/></svg>
<div class="a" style="left:1146px;top:747px;width:146px;height:502px;border:1px solid #c1c3c4;background:#fff"></div>
<svg style="left:1152px;top:756px" width="28" height="28" viewBox="0 0 28 28"><rect x="2" y="1" width="20" height="18" fill="#4a5a6a"/><rect x="4" y="3" width="16" height="14" fill="url(#scr)"/><defs><linearGradient id="scr" x1="0" y1="0" x2="0" y2="1"><stop offset="0" stop-color="#7ac0e8"/><stop offset="1" stop-color="#2a80b8"/></linearGradient></defs><path d="M2 20H24L27 26H4Z" fill="#333"/></svg>
<div class="t" style="left:1190px;top:758.9px;font-size:21.4px;color:#232627;">Computer</div>
<svg style="left:1153px;top:797px" width="38" height="34"><use href="#folderblue" width="38" height="34"/></svg>
<div class="t" style="left:1203.5px;top:802.6px;font-size:21.4px;color:#232627;">user</div>
<div class="a" style="left:1300px;top:747px;width:851px;height:502px;border:1px solid #c1c3c4;background:#fff"></div>
<div class="a" style="left:1301px;top:748px;width:780px;height:33px;background:linear-gradient(#f8f8f8,#ececec);border-bottom:1px solid #d0d1d2"></div>
<div class="a" style="left:1711px;top:749px;width:1px;height:32px;background:#cfd0d1"></div>
<div class="a" style="left:1806px;top:749px;width:1px;height:32px;background:#cfd0d1"></div>
<div class="a" style="left:1909px;top:749px;width:1px;height:32px;background:#cfd0d1"></div>
<div class="t" style="left:1334.5px;top:753.9px;font-size:21.4px;color:#232627;">Name</div>
<svg style="left:1690px;top:760px" width="13" height="8"><use href="#ddarrow" width="13" height="8"/></svg>
<div class="t" style="left:1715px;top:753.9px;font-size:21.4px;color:#232627;">Size</div>
<div class="t" style="left:1811px;top:753.9px;font-size:21.4px;color:#232627;">Type</div>
<div class="t" style="left:1913.5px;top:753.9px;font-size:21.4px;color:#232627;">Date Modified</div>
<div class="a" style="left:1301px;top:783px;width:36px;height:31px;background:#3a8ecb"></div>
<svg style="left:1305px;top:788px" width="27" height="22"><use href="#folderblue" width="27" height="22"/></svg>
<div class="a" style="left:1340px;top:784px;width:110px;height:29px;background:#3a8ecb"></div>
<div class="a" style="left:1448px;top:785px;width:2px;height:27px;background:#111"></div>
<div class="a" style="left:1712px;top:783px;width:369px;height:31px;background:#3a8ecb"></div>
<div class="t" style="left:1342px;top:787.9px;font-size:21.4px;color:#fff;">New Folder</div>
<div class="t" style="left:1814px;top:787.9px;font-size:21.4px;color:#fff;">Folder</div>
<div class="t" style="left:1915px;top:787.9px;font-size:21.4px;color:#fff;">4/16/26 4:07 PM</div>
<div class="t" style="left:1146px;top:1269.4px;font-size:21.4px;color:#232627;">Directory:</div>
<div class="a" style="left:1270px;top:1260px;width:742px;height:41px;border:1px solid #b9bbbc;border-radius:5px;background:#fff"></div>
<div class="t" style="left:1146px;top:1324.9px;font-size:21.4px;color:#232627;">Files of type:</div>
<div class="a" style="left:1270px;top:1316px;width:742px;height:41px;border:1px solid #b9bbbc;border-radius:5px;background:linear-gradient(#fcfcfc,#efefef)"></div>
<div class="t" style="left:1279px;top:1324.9px;font-size:21.4px;color:#232627;">Directories</div>
<svg style="left:1987px;top:1332px" width="13" height="8"><use href="#ddarrow" width="13" height="8"/></svg>
<div class="a" style="left:2018px;top:1255px;width:133px;height:50px;border:2px solid #5f9fd0;border-radius:5px;background:linear-gradient(#f4f8fb,#e0ebf3)"></div>
<svg style="left:2028px;top:1260px" width="40" height="40" viewBox="0 0 40 40"><defs><linearGradient id="fy" x1="0" y1="0" x2="0" y2="1"><stop offset="0" stop-color="#f8d890"/><stop offset="1" stop-color="#c88a20"/></linearGradient></defs><path d="M3 2H16L19 6H35V18H3Z" fill="#e8c070"/><path d="M6 14H38L33 38H1Z" fill="url(#fy)"/></svg>
<div class="t" style="left:2070.6px;top:1269.4px;font-size:21.4px;color:#232627;">Choose</div>
<div class="a" style="left:2071px;top:1291px;width:13px;height:2px;background:#232627"></div>
<div class="a" style="left:2018px;top:1311px;width:133px;height:48px;border:1px solid #b9bbbc;border-radius:5px;background:linear-gradient(#fbfbfb,#ececec)"></div>
<svg style="left:2031px;top:1315px" width="38" height="40" viewBox="0 0 38 40"><path d="M4 4L32 36M33 5L5 36" stroke="#5a1a1a" stroke-width="8" stroke-linecap="round"/><path d="M4 4L32 36M33 5L5 36" stroke="#c04050" stroke-width="5.5" stroke-linecap="round"/></svg>
<div class="t" style="left:2073px;top:1324.9px;font-size:21.4px;color:#232627;">Cancel</div>
<svg style="left:2025px;top:713px" width="28" height="44" viewBox="0 0 28 44"><path d="M2 2V34L10 27L16 42L22 39L16 25H27Z" fill="#2a2a2a" stroke="#fff" stroke-width="1.5" stroke-linejoin="round"/></svg></body></html>
